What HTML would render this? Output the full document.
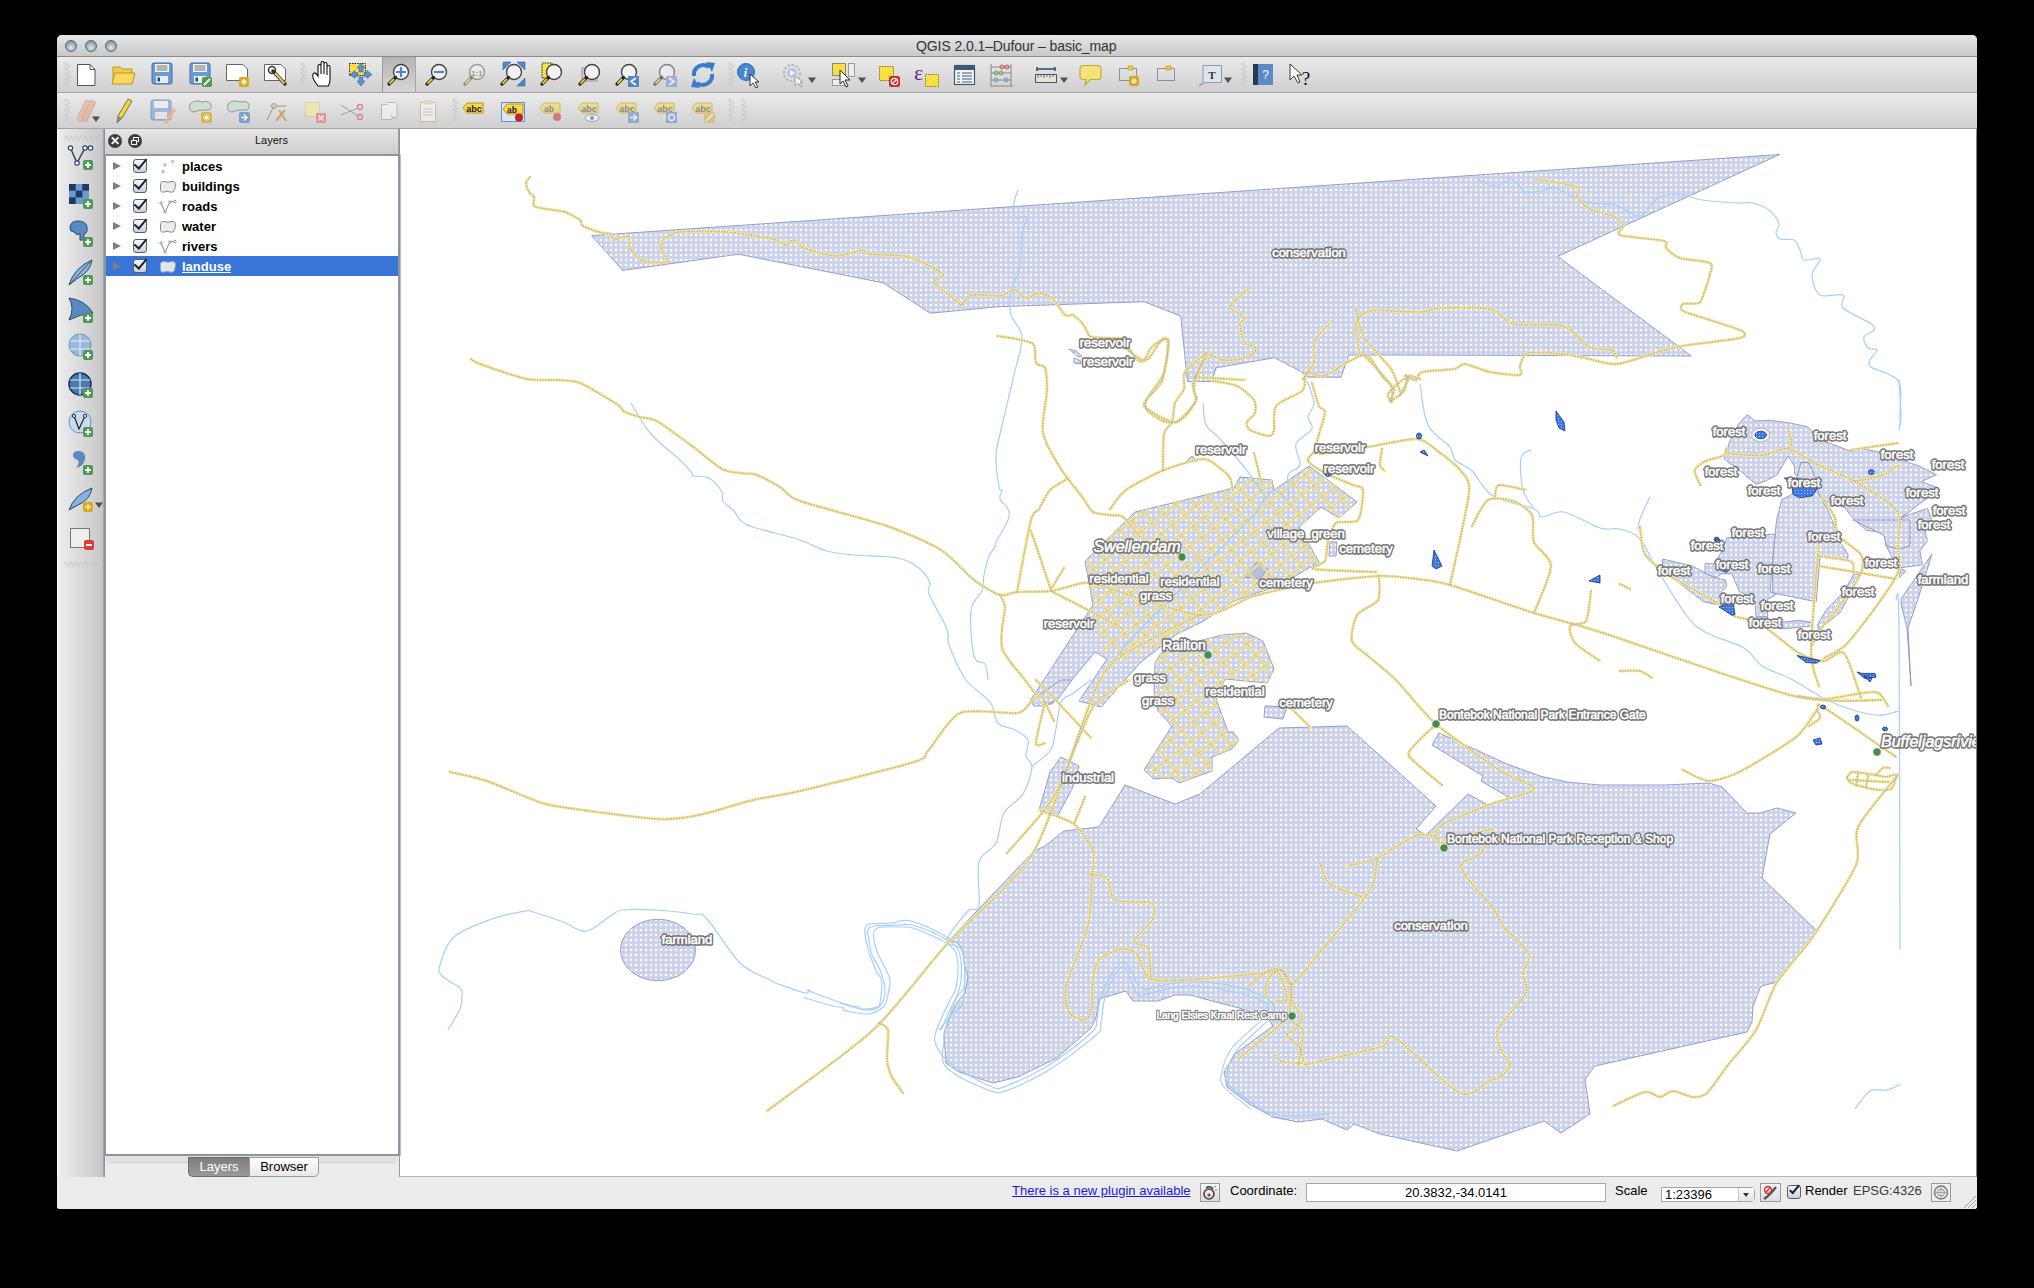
<!DOCTYPE html>
<html><head><meta charset="utf-8">
<style>
*{margin:0;padding:0;box-sizing:border-box}
html,body{width:2034px;height:1288px;background:#000;overflow:hidden;font-family:"Liberation Sans",sans-serif}
.a{position:absolute}
#win{position:absolute;left:57px;top:35px;width:1920px;height:1174px;background:#ececec;border-radius:5px 5px 3px 3px;overflow:hidden}
#title{position:absolute;left:0;top:0;width:1920px;height:22px;background:linear-gradient(#e6e6e6,#c9c9c9);border-bottom:1px solid #8a8a8a}
#title .t{position:absolute;left:859px;top:3px;font-size:14px;color:#333;white-space:nowrap;letter-spacing:-0.09px}
.lights{position:absolute;top:5px;width:12px;height:12px;border-radius:50%;background:radial-gradient(circle at 50% 65%,#e4ecf2 0,#a8b6c2 45%,#6c7a86 100%);border:1px solid #5d6770}
#tb1{position:absolute;left:0;top:22px;width:1920px;height:36px;background:linear-gradient(#ebebeb,#cfcfcf);border-bottom:1px solid #a5a5a5}
#tb2{position:absolute;left:0;top:58px;width:1920px;height:36px;background:linear-gradient(#ebebeb,#cfcfcf);border-bottom:1px solid #a5a5a5}
#ltb{position:absolute;left:0;top:94px;width:48px;height:1048px;background:linear-gradient(90deg,#fafafa 0,#fafafa 1px,#ececec 2px,#c9c9c9 45px,#a3abb2 46.5px,#7f8a94 48px)}
#dock{position:absolute;left:48px;top:94px;width:295px;height:1048px;background:#ececec}
#docktitle{position:absolute;left:0;top:0;width:295px;height:25px;background:linear-gradient(#e6e6e6,#cecece)}
#tree{position:absolute;left:0;top:25px;width:295px;height:1002px;background:#fff;border-left:1px solid #8c959c;border-right:2px solid #8c959c;border-bottom:2px solid #8c959c;border-top:2px solid #8f989f}
#map{position:absolute;left:343px;top:94px;width:1577px;height:1048px;background:#fff;border-bottom:1px solid #b4b4b4;overflow:hidden}
#status{position:absolute;left:0;top:1142px;width:1920px;height:32px;background:#ececec}
.row{position:absolute;left:0px;width:292px;height:20px;font-size:13px;font-weight:bold;color:#000}
.row span{position:absolute;left:76px;top:3px}
.sel{background:#3875d7;color:#fff}
.sel span{text-decoration:underline}
.arrow{position:absolute;left:7px;top:6px;width:0;height:0;border-left:8px solid #808080;border-top:4.5px solid transparent;border-bottom:4.5px solid transparent}
.cb{position:absolute;left:27px;top:3px;width:14px;height:14px;border:1px solid #5a5f66;border-radius:3px;background:linear-gradient(#f6f8fa,#c9d2da)}
.cb:after{content:"";position:absolute;left:3px;top:-4px;width:5px;height:11px;border-right:2.5px solid #1a2430;border-bottom:2.5px solid #1a2430;transform:rotate(40deg)}
.st{position:absolute;font-size:13px;color:#000;white-space:nowrap}
.lbl{font-family:"Liberation Sans",sans-serif;font-size:13px;fill:#fff;stroke:#6e6e6e;stroke-width:3.4px;stroke-linejoin:round}
.lbl2{font-family:"Liberation Sans",sans-serif;font-size:13px;fill:#fafafa;stroke:#fafafa;stroke-width:0.7px;stroke-linejoin:round}
</style></head><body>
<div id="win">
  <div id="title">
    <div class="lights" style="left:8px"></div>
    <div class="lights" style="left:28px"></div>
    <div class="lights" style="left:48px"></div>
    <div class="t">QGIS 2.0.1–Dufour – basic_map</div>
  </div>
  <div id="tb1"></div>
  <div id="tb2"></div>
  <div id="ltb"></div>
  <div id="dock">
    <div id="docktitle">
      <div class="a" style="left:3px;top:5px;width:14px;height:14px;border-radius:50%;background:#3d3d3d;color:#fff;font-size:12px;font-weight:bold;text-align:center;line-height:14px">✕</div>
      <div class="a" style="left:23px;top:5px;width:14px;height:14px;border-radius:50%;background:#3d3d3d"><div class="a" style="left:5px;top:3px;width:6px;height:5px;border:1.3px solid #fff"></div><div class="a" style="left:3px;top:6px;width:6px;height:5px;border:1.3px solid #fff;background:#3d3d3d"></div></div>
      <div class="a" style="left:40px;top:5px;width:253px;text-align:center;font-size:11px;color:#111">Layers</div>
    </div>
    <div id="tree">
      <div class="row" style="top:0"><div class="arrow"></div><div class="cb"></div><svg class="gi" width="18" height="16" style="position:absolute;left:53px;top:2px"><rect x="12.5" y="2.5" width="2" height="2" transform="rotate(45 13.5 3.5)" fill="#fff" stroke="#777" stroke-width="0.7"/><rect x="5" y="6" width="2" height="2" transform="rotate(45 6 7)" fill="#fff" stroke="#777" stroke-width="0.7"/><rect x="3" y="12.5" width="2" height="2" transform="rotate(45 4 13.5)" fill="#fff" stroke="#777" stroke-width="0.7"/></svg><span>places</span></div>
      <div class="row" style="top:20px"><div class="arrow"></div><div class="cb"></div><svg class="gi" width="18" height="14" style="position:absolute;left:53px;top:4px"><path d="M1.5,5 Q1,1.5 5,1.5 Q9,3 13,1.5 Q16.5,1 16.5,5 Q16,8 15.5,10 Q15,13 11,12 Q8,10.5 5,12 Q1.5,13 1.5,9 Z" fill="#ececec" stroke="#8a8a8a" stroke-width="1"/></svg><span>buildings</span></div>
      <div class="row" style="top:40px"><div class="arrow"></div><div class="cb"></div><svg class="gi" width="18" height="16" style="position:absolute;left:53px;top:2px"><path d="M2,5 L6,14 L11,4 L16,3.5" fill="none" stroke="#777" stroke-width="0.9"/><circle cx="2" cy="5" r="1.2" fill="#fff" stroke="#777" stroke-width="0.7"/><circle cx="6" cy="14" r="1.2" fill="#fff" stroke="#777" stroke-width="0.7"/><circle cx="11" cy="4" r="1.2" fill="#fff" stroke="#777" stroke-width="0.7"/><circle cx="16" cy="3.5" r="1.2" fill="#fff" stroke="#777" stroke-width="0.7"/></svg><span>roads</span></div>
      <div class="row" style="top:60px"><div class="arrow"></div><div class="cb"></div><svg class="gi" width="18" height="14" style="position:absolute;left:53px;top:4px"><path d="M1.5,5 Q1,1.5 5,1.5 Q9,3 13,1.5 Q16.5,1 16.5,5 Q16,8 15.5,10 Q15,13 11,12 Q8,10.5 5,12 Q1.5,13 1.5,9 Z" fill="#ececec" stroke="#8a8a8a" stroke-width="1"/></svg><span>water</span></div>
      <div class="row" style="top:80px"><div class="arrow"></div><div class="cb"></div><svg class="gi" width="18" height="16" style="position:absolute;left:53px;top:2px"><path d="M2,5 L6,14 L11,4 L16,3.5" fill="none" stroke="#777" stroke-width="0.9"/><circle cx="2" cy="5" r="1.2" fill="#fff" stroke="#777" stroke-width="0.7"/><circle cx="6" cy="14" r="1.2" fill="#fff" stroke="#777" stroke-width="0.7"/><circle cx="11" cy="4" r="1.2" fill="#fff" stroke="#777" stroke-width="0.7"/><circle cx="16" cy="3.5" r="1.2" fill="#fff" stroke="#777" stroke-width="0.7"/></svg><span>rivers</span></div>
      <div class="row sel" style="top:100px"><div class="arrow"></div><div class="cb"></div><svg class="gi" width="18" height="14" style="position:absolute;left:53px;top:4px"><path d="M1.5,5 Q1,1.5 5,1.5 Q9,3 13,1.5 Q16.5,1 16.5,5 Q16,8 15.5,10 Q15,13 11,12 Q8,10.5 5,12 Q1.5,13 1.5,9 Z" fill="#dfe6ee" stroke="#a0a8b0" stroke-width="1"/></svg><span>landuse</span></div>
    </div>
    <div class="a" style="left:1px;top:1027px;width:292px;height:7px;border-radius:0 0 5px 5px;background:#e2e2e2;border-bottom:1px solid #d0d0d0"></div>
    <div class="a" style="left:83px;top:1028px;width:61px;height:20px;border:1px solid #6e6e6e;border-right:none;border-radius:0 0 0 5px;background:linear-gradient(#7d7d7d,#9a9a9a);color:#fff;font-size:13px;text-align:center;line-height:18px">Layers</div>
    <div class="a" style="left:144px;top:1028px;width:70px;height:20px;border:1px solid #9a9a9a;border-radius:0 0 5px 0;background:linear-gradient(#fdfdfd,#e8e8e8);color:#000;font-size:13px;text-align:center;line-height:18px">Browser</div>
  </div>
  <div id="map">
    <svg width="1577" height="1048" viewBox="400 129 1577 1048" style="position:absolute;left:0;top:0">
<defs>
<pattern id="dots" width="5" height="5" patternUnits="userSpaceOnUse" x="0" y="4">
<rect width="5" height="5" fill="#cdd4eb"/><rect x="0" y="0" width="2" height="2" fill="#ffffff"/><rect x="3" y="3" width="1" height="1" fill="#c3cae3"/>
</pattern>
<pattern id="wdots" width="3" height="3" patternUnits="userSpaceOnUse">
<rect width="3" height="3" fill="#3b78e8"/><rect x="1" y="1" width="1" height="1" fill="#a9c6f7"/>
</pattern>
<pattern id="streets" width="15" height="14" patternUnits="userSpaceOnUse" patternTransform="rotate(-38)">
<path d="M0,1.5 H15 M1.5,0 V14" stroke="#f8e68c" stroke-width="3" fill="none"/><path d="M0,1.5 H15 M1.5,0 V14" stroke="#bdbaa8" stroke-width="1.2" stroke-dasharray="1.4 1.4" fill="none"/>
</pattern>
<clipPath id="townclip">
<polygon points="1161,653 1202,640 1223,635 1246,633 1263,641 1274,669 1267,683 1225,679 1216,698 1228,732 1233,732 1239,740 1232,749 1212,757 1212,771 1179,783 1172,778 1154,779 1144,770 1172,726 1158,711 1154,693 1155,663"/>
<polygon points="1085,561 1135,512 1234,488 1240,477 1272,480 1274,490 1309,466 1357,502 1339,518 1321,507 1299,527 1319,562 1280,585 1234,601 1202,622 1150,650 1115,668 1098,645 1093,605"/>
</clipPath>
</defs>
<g fill="url(#dots)" stroke="#8b95c6" stroke-width="0.9">
<polygon points="591.6,235.6 1000,207.5 1400,180.3 1779.6,154.5 1557.6,256.4 1691.3,356 1400,355 1349,355 1341,377.3 1307,377 1301.6,371.8 1274.5,357.7 1216,367.8 1212,381.4 1187.5,381.4 1180.7,316 1144,301.7 1000,306.6 930.4,313.2 883,282.8 738.5,254.2 622.7,270.4"/>
<polygon points="1125,785 1175,804 1200,794 1279,728 1347,726 1436,806 1416,829 1426,835 1468,794 1488,805 1510,798 1481,781 1483,776 1432,745 1439,733 1472,748 1507,764 1540,776 1567,782 1600,785 1665,785 1709,783 1722,787 1747,813 1760,813 1777,808 1796,813 1770,834 1762,878 1817,931 1778,982 1761,986 1753,1006 1752,1022 1747,1032 1595,1066 1585,1079 1590,1114 1561,1133 1544,1121 1457,1151 1380,1134 1354,1124 1347,1130 1322,1119 1298,1122 1273,1117 1249,1104 1227,1087 1224,1072 1236,1053 1273,1026 1268,1018 1239,1008 1212,1001 1190,995 1175,995 1158,1001 1133,1001 1126,991 1099,999 1096,1018 1091,1028 1057,1058 1018,1077 993,1083 959,1072 946,1063 944,1036 945.2,1030 949.6,1017 956,1004 964.8,993 968,977 964.8,966 962.6,951 960.4,945.4 956,942 947.4,942 1034,851 1045,846 1064,831 1099,827"/>
<polygon points="1061,757 1079,766 1072,789 1057,817 1039,810 1050,772"/>
<polygon points="1030,701 1093,605 1085,561 1135,512 1234,488 1240,477 1272,480 1274,490 1309,466 1357,502 1339,518 1321,507 1299,527 1319,562 1280,585 1234,601 1202,622 1177,634 1141,662 1101,707 1079,701 1107,659 1095,652 1052,704 1034,705"/>
<polygon points="1161,653 1202,640 1223,635 1246,633 1263,641 1274,669 1267,683 1225,679 1216,698 1228,732 1233,732 1239,740 1232,749 1212,757 1212,771 1179,783 1172,778 1154,779 1144,770 1172,726 1158,711 1154,693 1155,663"/>
<polygon points="1265,706 1287,707 1283,719 1264,717"/>
<polygon points="1330,542 1337,542 1336,556 1329,556"/>
<polygon points="1069,349 1076,351 1082,356 1078,357"/>
<polygon points="1074,358 1081,361 1081,364 1074,363"/>
<polygon points="1186,462 1192,456 1197,461"/>
<polygon points="1724.3,458.7 1729.4,442.1 1738.3,424.2 1747.3,414.6 1755,421 1769.7,420.3 1789.5,422.9 1807.4,426.7 1821.4,440.2 1852.1,451.7 1859.8,448.5 1891.7,454.2 1902,460 1919.9,466.4 1936.5,474.7 1921.1,481.7 1935.2,486.8 1937.8,494.5 1927.5,498.3 1919.9,503.4 1907.1,513.7 1902,516.2 1899.4,532.8 1885.4,532.8 1866.2,530.3 1853.4,518.8 1844.4,507.3 1827.8,502.2 1818.9,494.5 1815,481.7 1808.7,462.5 1801,462.5 1798.4,476.6 1794.6,474 1794.6,466.4 1788.2,456.1 1776.7,475.3 1763.9,481.7 1756.2,484.3 1740.9,471.5 1726.8,461.2"/>
<polygon points="1902,517 1927.5,508.5 1931.4,518.8 1925,532.8 1927.5,540.5 1919.9,550.7 1922.4,565 1898,568 1886,546 1884,533 1899.4,532.8"/>
<polygon points="1781.8,499.6 1792,494.5 1801,462.5 1808.7,462.5 1815,476.6 1818.9,494.5 1827.8,509.8 1834.2,525.2 1840.6,543 1848.1,554.5 1847.5,560.9 1820,557 1816.2,601.8 1772.7,592.9 1772.7,558.3 1776.6,520"/>
<polygon points="1662.8,559 1692.2,566 1713.9,577.5 1725.4,580.1 1726.7,586.5 1721.6,591.6 1721.6,603.1 1716.5,604.4 1703.7,601.8 1675.6,580.1 1669.2,573.7 1662.1,566"/>
<polygon points="1705,563.5 1713.9,564.1 1721.6,552 1726.7,537.9 1775.3,534.1 1772.7,558.3 1770.2,591.6 1776.6,594.1 1767.6,599.3 1767.6,617.2 1756.1,617.2 1754.8,599.3 1739.5,591.6 1731.8,573.7 1721.6,573.7 1716.5,577.5 1705,573.7"/>
<polygon points="1783,622.3 1798.3,620.3 1812.3,622.3 1811,626.1 1785.5,628.7 1777.8,628.7"/>
<polygon points="1756,617 1767.6,617 1767.6,628.7 1756,627.4"/>
<polygon points="1817.5,624.8 1826.4,609.5 1844.3,591.6 1853.2,575 1859.6,573.7 1850.7,592.9 1840.5,612 1825.1,624.8 1818.7,629.9"/>
<polygon points="1853.2,520 1883.9,535.3 1886.5,545.6 1899.3,549.4 1910,545.6 1910,520"/>
<polygon points="1900.5,568.6 1905.7,571.1 1899.3,577.5"/>
<polygon points="1901,599 1932,554 1918,599 1908,628 1911,686 1907,628 1901,604"/>
<polygon points="1031,702 1045,691 1061,680 1072,680 1058,699 1045,706 1034,706"/>
<ellipse cx="658" cy="950" rx="37.5" ry="30.7"/>
</g>
<g fill="#b3bee3" stroke="#8b95c6" stroke-width="0.9">
<polygon points="1243,577 1257,562 1268,569 1260,579"/>
</g>
<rect x="1000" y="440" width="900" height="360" fill="url(#streets)" clip-path="url(#townclip)" opacity="0.9"/>
<g fill="none" stroke="#a6cefc" stroke-width="1.2" stroke-linejoin="round">
<path d="M1477,179 C1480.0,180.2 1489.3,186.0 1495,186 C1500.7,186.0 1507.2,179.3 1511,179 C1514.8,178.7 1515.7,181.8 1518,184 C1520.3,186.2 1521.2,190.8 1525,192 C1528.8,193.2 1536.0,191.7 1541,191 C1546.0,190.3 1549.5,187.0 1555,188 C1560.5,189.0 1568.2,194.5 1574,197 C1579.8,199.5 1583.2,201.7 1590,203 C1596.8,204.3 1606.8,202.8 1615,205 C1623.2,207.2 1632.7,216.3 1639,216 C1645.3,215.7 1649.3,206.3 1653,203 C1656.7,199.7 1656.0,197.3 1661,196 C1666.0,194.7 1676.2,194.3 1683,195 C1689.8,195.7 1693.0,198.7 1702,200 C1711.0,201.3 1728.5,202.5 1737,203 C1745.5,203.5 1747.5,201.7 1753,203 C1758.5,204.3 1765.7,207.5 1770,211 C1774.3,214.5 1778.0,220.5 1779,224 C1780.0,227.5 1775.8,229.5 1776,232 C1776.2,234.5 1777.0,237.7 1780,239 C1783.0,240.3 1790.7,238.2 1794,240 C1797.3,241.8 1798.3,246.7 1800,250 C1801.7,253.3 1800.7,258.5 1804,260 C1807.3,261.5 1818.7,256.5 1820,259 C1821.3,261.5 1812.0,269.0 1812,275 C1812.0,281.0 1814.8,291.7 1820,295 C1825.2,298.3 1839.2,292.8 1843,295 C1846.8,297.2 1838.5,303.3 1843,308 C1847.5,312.7 1864.8,319.3 1870,323 C1875.2,326.7 1875.0,327.7 1874,330 C1873.0,332.3 1865.0,334.0 1864,337 C1863.0,340.0 1865.8,345.8 1868,348 C1870.2,350.2 1876.7,348.0 1877,350 C1877.3,352.0 1871.0,357.2 1870,360 C1869.0,362.8 1867.7,364.5 1871,367 C1874.3,369.5 1885.2,372.0 1890,375 C1894.8,378.0 1898.3,378.3 1900,385 C1901.7,391.7 1900.0,408.3 1900,415 C1900.0,421.7 1900.0,423.3 1900,425"/>
<path d="M631,403 C634.3,408.2 642.8,424.5 651,434 C659.2,443.5 673.2,453.5 680,460 C686.8,466.5 689.8,470.3 692,473 C694.2,475.7 690.2,475.2 693,476 C695.8,476.8 704.2,475.3 709,478 C713.8,480.7 719.7,488.2 722,492 C724.3,495.8 721.0,497.8 723,501 C725.0,504.2 730.8,507.5 734,511 C737.2,514.5 738.3,519.2 742,522 C745.7,524.8 750.5,526.2 756,528 C761.5,529.8 767.7,531.0 775,533 C782.3,535.0 791.3,537.0 800,540 C808.7,543.0 818.0,548.5 827,551 C836.0,553.5 842.2,553.8 854,555 C865.8,556.2 887.0,555.7 898,558 C909.0,560.3 914.7,564.8 920,569 C925.3,573.2 928.5,578.8 930,583 C931.5,587.2 926.2,586.3 929,594 C931.8,601.7 943.7,620.5 947,629 C950.3,637.5 945.8,636.5 949,645 C952.2,653.5 959.2,670.5 966,680 C972.8,689.5 984.7,694.8 990,702 C995.3,709.2 993.8,718.3 998,723 C1002.2,727.7 1010.0,727.2 1015,730 C1020.0,732.8 1026.2,735.7 1028,740 C1029.8,744.3 1025.3,751.5 1026,756 C1026.7,760.5 1032.5,760.7 1032,767 C1031.5,773.3 1027.7,786.3 1023,794 C1018.3,801.7 1008.5,804.8 1004,813 C999.5,821.2 1000.2,834.8 996,843 C991.8,851.2 981.8,851.5 979,862 C976.2,872.5 980.8,897.8 979,906 C977.2,914.2 973.3,905.2 968,911 C962.7,916.8 947.8,934.2 947,941 C946.2,947.8 960.3,942.2 963,952 C965.7,961.8 964.8,989.7 963,1000 C961.2,1010.3 956.0,1009.0 952,1014 C948.0,1019.0 941.2,1027.3 939,1030"/>
<path d="M1018,190 C1017.3,192.2 1014.5,198.5 1014,203 C1013.5,207.5 1012.8,214.7 1015,217 C1017.2,219.3 1025.8,214.3 1027,217 C1028.2,219.7 1023.2,224.8 1022,233 C1020.8,241.2 1021.8,256.0 1020,266 C1018.2,276.0 1012.5,284.8 1011,293 C1009.5,301.2 1009.2,307.7 1011,315 C1012.8,322.3 1021.5,327.0 1022,337 C1022.5,347.0 1017.7,358.8 1014,375 C1010.3,391.2 1003.0,420.5 1000,434 C997.0,447.5 996.2,447.2 996,456 C995.8,464.8 998.0,481.3 999,487 C1000.0,492.7 1001.8,488.0 1002,490 C1002.2,492.0 999.0,495.8 1000,499 C1001.0,502.2 1006.7,505.5 1008,509 C1009.3,512.5 1010.0,514.5 1008,520 C1006.0,525.5 998.2,537.5 996,542 C993.8,546.5 996.2,544.7 995,547 C993.8,549.3 990.8,551.3 989,556 C987.2,560.7 985.2,569.2 984,575 C982.8,580.8 984.2,585.2 982,591 C979.8,596.8 972.3,599.2 971,610 C969.7,620.8 971.7,647.0 974,656 C976.3,665.0 982.7,660.0 985,664 C987.3,668.0 987.5,677.3 988,680"/>
<path d="M1091,680 C1087.8,682.3 1077.0,690.3 1072,694 C1067.0,697.7 1063.8,695.3 1061,702 C1058.2,708.7 1056.8,725.8 1055,734 C1053.2,742.2 1054.0,745.5 1050,751 C1046.0,756.5 1034.2,764.3 1031,767"/>
<path d="M448,1030 C450.0,1026.5 457.7,1014.8 460,1009 C462.3,1003.2 462.0,998.5 462,995 C462.0,991.5 463.3,991.2 460,988 C456.7,984.8 445.3,979.8 442,976 C438.7,972.2 438.0,971.5 440,965 C442.0,958.5 445.3,944.7 454,937 C462.7,929.3 480.2,923.3 492,919 C503.8,914.7 518.2,912.2 525,911 C531.8,909.8 526.7,910.2 533,912 C539.3,913.8 555.3,919.0 563,922 C570.7,925.0 574.5,928.7 579,930 C583.5,931.3 584.5,932.5 590,930 C595.5,927.5 606.5,918.3 612,915 C617.5,911.7 615.8,910.8 623,910 C630.2,909.2 643.3,909.3 655,910 C666.7,910.7 684.3,912.5 693,914 C701.7,915.5 699.2,910.8 707,919 C714.8,927.2 729.5,952.8 740,963 C750.5,973.2 763.3,976.4 770,980 C776.7,983.6 774.0,982.4 780,984.6 C786.0,986.8 801.3,992.2 806,993 C810.7,993.8 806.7,989.5 808,989.5 C809.3,989.5 807.2,990.4 814,993 C820.8,995.6 841.2,1002.7 848.5,1005 C855.8,1007.3 855.6,1006.3 858,1007 C860.4,1007.7 859.6,1008.9 862.6,1009 C865.6,1009.1 872.8,1008.4 875.7,1007.4 C878.6,1006.4 879.0,1007.4 880,1003 C881.0,998.6 882.3,986.5 881.6,981 C880.9,975.5 877.6,974.3 875.7,970 C873.8,965.7 871.6,960.0 870,955 C868.4,950.0 866.8,944.3 866,940 C865.2,935.7 864.3,931.7 865,929 C865.7,926.3 865.7,925.0 870,924 C874.3,923.0 885.3,923.6 891,923 C896.7,922.4 900.4,920.6 904,920.4 C907.6,920.1 907.9,920.1 912.6,921.5 C917.3,922.9 926.3,926.4 932,929 C937.7,931.6 943.3,935.0 947,937 C950.7,939.0 951.8,939.4 954,941 C956.2,942.6 958.4,943.8 960,946.5 C961.6,949.2 962.9,952.8 963.7,957 C964.5,961.2 964.8,966.3 964.8,971.5 C964.8,976.7 965.2,983.4 963.7,988 C962.2,992.6 959.1,992.0 956,999 C952.9,1006.0 947.0,1023.2 945,1030 C943.0,1036.8 943.8,1033.8 944,1040 C944.2,1046.2 938.7,1058.7 946,1067 C953.3,1075.3 977.7,1086.2 988,1090 C998.3,1093.8 997.3,1093.7 1008,1090 C1018.7,1086.3 1037.3,1077.2 1052,1068 C1066.7,1058.8 1087.8,1042.5 1096,1035 C1104.2,1027.5 1099.3,1029.8 1101,1023 C1102.7,1016.2 1102.3,1003.3 1106,994 C1109.7,984.7 1117.7,967.0 1123,967 C1128.3,967.0 1132.2,990.0 1138,994 C1143.8,998.0 1148.5,992.3 1158,991 C1167.5,989.7 1179.8,985.2 1195,986 C1210.2,986.8 1236.8,991.8 1249,996 C1261.2,1000.2 1270.8,1002.3 1268,1011 C1265.2,1019.7 1239.7,1037.8 1232,1048 C1224.3,1058.2 1223.3,1065.5 1222,1072 C1220.7,1078.5 1219.2,1080.8 1224,1087 C1228.8,1093.2 1246.5,1105.3 1251,1109"/>
<path d="M804,997.6 C808.8,999.0 826.5,1004.4 833,1006 C839.5,1007.6 841.0,1006.6 843,1007.4 C845.0,1008.2 841.0,1009.6 845,1010.7 C849.0,1011.8 861.5,1014.0 867,1014 C872.5,1014.0 875.0,1012.2 878,1010.7 C881.0,1009.2 883.2,1008.3 885,1005 C886.8,1001.7 887.9,995.3 888.7,991 C889.5,986.7 890.8,983.5 889.8,979 C888.8,974.5 885.2,968.7 883,964 C880.8,959.3 878.3,955.7 876.7,951 C875.1,946.3 873.7,939.4 873.5,935.7 C873.3,932.0 874.0,930.5 875.7,929 C877.5,927.5 879.5,927.3 884,927 C888.5,926.7 898.2,926.8 903,927 C907.8,927.2 907.8,926.5 912.6,928 C917.4,929.5 926.4,933.2 932,935.7 C937.6,938.2 942.2,940.5 946,943 C949.8,945.5 953.0,947.2 955,951 C957.0,954.8 957.8,959.8 958,966 C958.2,972.2 957.4,982.2 956,988 C954.6,993.8 952.9,994.0 949.6,1001 C946.4,1008.0 938.8,1022.7 936.5,1030 C934.2,1037.3 933.6,1039.3 936,1045 C938.4,1050.7 942.0,1057.2 951,1064 C960.0,1070.8 980.8,1082.3 990,1086 C999.2,1089.7 996.2,1089.5 1006,1086 C1015.8,1082.5 1034.8,1073.8 1049,1065 C1063.2,1056.2 1083.0,1040.5 1091,1033 C1099.0,1025.5 1095.2,1026.7 1097,1020 C1098.8,1013.3 1097.7,1002.7 1102,993 C1106.3,983.3 1116.5,962.8 1123,962 C1129.5,961.2 1134.8,984.0 1141,988 C1147.2,992.0 1150.8,987.2 1160,986 C1169.2,984.8 1180.8,980.2 1196,981 C1211.2,981.8 1238.0,986.0 1251,991 C1264.0,996.0 1276.3,1001.2 1274,1011 C1271.7,1020.8 1244.8,1039.8 1237,1050 C1229.2,1060.2 1228.3,1066.2 1227,1072 C1225.7,1077.8 1224.5,1079.7 1229,1085 C1233.5,1090.3 1249.8,1100.8 1254,1104"/>
<path d="M839,1003 C843.5,1004.2 859.2,1009.5 866,1010 C872.8,1010.5 876.8,1009.3 880,1006 C883.2,1002.7 885.0,996.0 885,990 C885.0,984.0 882.2,975.8 880,970 C877.8,964.2 873.8,960.0 872,955 C870.2,950.0 869.7,944.2 869,940 C868.3,935.8 867.0,932.3 868,930 C869.0,927.7 869.7,926.8 875,926 C880.3,925.2 893.8,925.2 900,925 C906.2,924.8 906.7,923.8 912,925 C917.3,926.2 926.2,929.5 932,932 C937.8,934.5 942.8,937.3 947,940 C951.2,942.7 954.7,944.5 957,948 C959.3,951.5 960.3,955.7 961,961 C961.7,966.3 961.5,974.7 961,980 C960.5,985.3 959.8,988.0 958,993 C956.2,998.0 952.8,1003.8 950,1010 C947.2,1016.2 942.5,1026.7 941,1030"/>
<path d="M1236,1092 C1242.2,1095.7 1257.0,1110.3 1273,1114 C1289.0,1117.7 1322.2,1114.0 1332,1114"/>
<path d="M1203,403 C1203.5,406.7 1203.2,419.0 1206,425 C1208.8,431.0 1212.8,431.0 1220,439 C1227.2,447.0 1241.2,462.8 1249,473 C1256.8,483.2 1264.0,495.5 1267,500"/>
<path d="M1307,381 C1308.2,384.7 1313.8,397.0 1314,403 C1314.2,409.0 1308.3,412.7 1308,417 C1307.7,421.3 1314.0,424.5 1312,429 C1310.0,433.5 1298.0,438.0 1296,444 C1294.0,450.0 1301.3,459.8 1300,465 C1298.7,470.2 1290.0,469.2 1288,475 C1286.0,480.8 1290.5,497.5 1288,500 C1285.5,502.5 1278.7,487.5 1273,490 C1267.3,492.5 1260.3,507.7 1254,515 C1247.7,522.3 1244.0,525.0 1235,534 C1226.0,543.0 1210.8,558.0 1200,569 C1189.2,580.0 1181.7,588.2 1170,600 C1158.3,611.8 1141.7,626.7 1130,640 C1118.3,653.3 1105.0,673.3 1100,680"/>
<path d="M1420,384 C1421.3,390.8 1423.0,414.5 1428,425 C1433.0,435.5 1445.5,441.2 1450,447 C1454.5,452.8 1451.3,456.0 1455,460 C1458.7,464.0 1465.7,465.0 1472,471 C1478.3,477.0 1482.7,489.7 1493,496 C1503.3,502.3 1525.8,505.5 1534,509 C1542.2,512.5 1537.0,516.5 1542,517 C1547.0,517.5 1554.3,510.2 1564,512 C1573.7,513.8 1590.7,525.2 1600,528 C1609.3,530.8 1613.3,527.2 1620,529 C1626.7,530.8 1633.8,532.3 1640,539 C1646.2,545.7 1649.2,556.2 1657,569 C1664.8,581.8 1678.7,605.3 1687,616 C1695.3,626.7 1697.5,627.7 1707,633 C1716.5,638.3 1734.8,642.5 1744,648 C1753.2,653.5 1753.8,660.7 1762,666 C1770.2,671.3 1781.5,674.0 1793,680 C1804.5,686.0 1817.3,696.2 1831,702 C1844.7,707.8 1863.7,713.5 1875,715 C1886.3,716.5 1895.0,711.7 1899,711"/>
<path d="M1531,450 C1529.3,451.3 1522.3,451.3 1521,458 C1519.7,464.7 1520.8,481.5 1523,490 C1525.2,498.5 1532.2,505.8 1534,509"/>
<path d="M1650,497 C1648.3,500.7 1642.0,513.5 1640,519 C1638.0,524.5 1638.3,528.2 1638,530"/>
<path d="M1899,380 C1899.3,386.2 1901.0,408.7 1901,417 C1901.0,425.3 1899.3,427.8 1899,430"/>
<path d="M1896,599 C1896.5,603.8 1898.3,569.7 1899,628 C1899.7,686.3 1899.8,895.5 1900,949"/>
<path d="M1855,1109 C1857.5,1106.0 1864.7,1094.2 1870,1091 C1875.3,1087.8 1881.8,1091.2 1887,1090 C1892.2,1088.8 1898.7,1085.0 1901,1084"/>
</g>
<g fill="none" stroke="#fde98a" stroke-width="3" stroke-linejoin="round" stroke-linecap="round">
<path d="M530,177 C529.5,177.8 526.1,181.1 526,183 C525.9,184.9 528.0,190.2 529,192 C530.0,193.8 533.4,195.2 534,197 C534.6,198.8 532.5,204.5 534,206 C535.5,207.5 542.1,208.2 546,209 C549.9,209.8 560.8,210.6 565,212 C569.2,213.4 577.8,218.2 580,220 C582.2,221.8 580.6,224.5 583,226 C585.4,227.5 595.5,231.0 599,232 C602.5,233.0 609.1,233.0 611,234 C612.9,235.0 611.9,239.8 614,240 C616.1,240.2 626.0,235.0 628,236 C630.0,237.0 628.2,245.0 630,248 C631.8,251.0 637.4,258.2 642,260 C646.6,261.8 664.6,263.5 667,262 C669.4,260.5 661.4,250.9 661,248 C660.6,245.1 661.6,241.0 664,239 C666.4,237.0 672.2,232.9 680,232 C687.8,231.1 714.4,231.1 726,232 C737.6,232.9 765.6,237.4 773,239 C780.4,240.6 782.4,244.9 785,245 C787.6,245.1 791.6,239.6 794,240 C796.4,240.4 798.9,246.0 804,248 C809.1,250.0 827.6,255.8 835,256 C842.4,256.2 858.8,250.2 863,250 C867.2,249.8 863.2,253.1 869,254 C874.8,254.9 899.8,254.5 909,257 C918.2,259.5 939.9,270.9 943,274 C946.1,277.1 932.8,279.0 934,282 C935.2,285.0 949.5,295.1 953,298 C956.5,300.9 959.8,305.4 962,305 C964.2,304.6 966.2,296.1 971,295 C975.8,293.9 994.6,296.6 1000,296 C1005.4,295.4 1010.6,289.8 1014,290 C1017.4,290.2 1024.0,297.6 1027,298 C1030.0,298.4 1034.9,293.0 1038,293 C1041.1,293.0 1048.6,295.2 1052,298 C1055.4,300.8 1062.4,312.9 1065,315 C1067.6,317.1 1070.9,314.0 1073,315 C1075.1,316.0 1080.2,321.0 1082,323 C1083.8,325.0 1085.8,329.2 1087,331 C1088.2,332.8 1087.2,336.0 1092,337 C1096.8,338.0 1120.5,337.8 1125,339 C1129.5,340.2 1126.2,344.2 1128,347 C1129.8,349.8 1136.4,359.6 1139,361 C1141.6,362.4 1146.4,360.4 1149,358 C1151.6,355.6 1157.6,344.4 1160,342 C1162.4,339.6 1167.0,338.0 1168,339 C1169.0,340.0 1168.6,345.5 1168,350 C1167.4,354.5 1165.6,368.9 1163,375 C1160.4,381.1 1149.0,394.6 1147,399 C1145.0,403.4 1145.0,407.2 1147,410 C1149.0,412.8 1159.2,419.5 1163,421 C1166.8,422.5 1173.9,423.0 1177,422 C1180.1,421.0 1185.6,415.9 1188,413 C1190.4,410.1 1195.4,402.8 1196,399 C1196.6,395.2 1191.6,388.4 1193,383 C1194.4,377.6 1205.2,359.4 1207,356"/>
<path d="M471,359 C472.1,359.6 473.0,361.5 480,364 C487.0,366.5 517.0,377.0 527,379 C537.0,381.0 553.8,379.6 560,380 C566.2,380.4 573.2,381.0 577,382 C580.8,383.0 584.9,385.1 590,388 C595.1,390.9 613.6,402.0 618,405 C622.4,408.0 622.2,410.5 625,412 C627.8,413.5 636.8,416.1 640,417 C643.2,417.9 648.5,418.2 651,419 C653.5,419.8 654.9,419.6 660,423 C665.1,426.4 684.2,440.2 692,446 C699.8,451.8 716.0,465.6 722,469 C728.0,472.4 735.6,472.2 740,473 C744.4,473.8 752.0,473.2 757,475 C762.0,476.8 774.6,483.8 780,487 C785.4,490.2 786.6,496.1 800,501 C813.4,505.9 869.4,519.9 887,526 C904.6,532.1 930.1,543.2 941,550 C951.9,556.8 966.6,574.4 974,580 C981.4,585.6 994.6,593.5 1000,595 C1005.4,596.5 1010.6,592.5 1017,592 C1023.4,591.5 1042.8,592.1 1051,591 C1059.2,589.9 1077.0,583.8 1083,583 C1089.0,582.2 1097.0,584.8 1099,585"/>
<path d="M1000,595 C1000.6,596.5 1004.8,602.8 1005,607 C1005.2,611.2 1002.4,623.9 1002,629 C1001.6,634.1 1000.8,643.6 1002,648 C1003.2,652.4 1009.1,660.0 1012,664 C1014.9,668.0 1022.0,676.1 1025,680 C1028.0,683.9 1034.6,693.1 1036,695"/>
<path d="M1051,591 C1055.6,593.4 1079.0,605.2 1088,610 C1097.0,614.8 1118.6,626.6 1123,629"/>
<path d="M1017,592 C1018.8,583.0 1028.2,530.4 1031,520 C1033.8,509.6 1036.6,512.8 1039,509 C1041.4,505.2 1046.2,493.9 1050,490 C1053.8,486.1 1066.6,479.5 1069,478"/>
<path d="M1031,531 L1051,590"/>
<path d="M1051,589 L1064,568"/>
<path d="M998,336 C1000.9,336.5 1016.5,338.9 1021,340 C1025.5,341.1 1032.1,342.1 1034,345 C1035.9,347.9 1034.6,360.1 1036,363 C1037.4,365.9 1043.6,364.6 1045,368 C1046.4,371.4 1047.2,381.9 1047,390 C1046.8,398.1 1041.2,423.1 1043,433 C1044.8,442.9 1056.0,460.9 1061,469 C1066.0,477.1 1079.0,492.6 1083,498 C1087.0,503.4 1089.6,509.9 1093,512 C1096.4,514.1 1106.2,514.4 1110,515 C1113.8,515.6 1119.2,514.2 1123,517 C1126.8,519.8 1137.9,534.5 1140,537"/>
<path d="M1110,509 C1112.0,506.6 1119.2,494.9 1126,490 C1132.8,485.1 1154.4,473.9 1164,470 C1173.6,466.1 1196.0,459.2 1203,459 C1210.0,458.8 1216.6,465.6 1220,468 C1223.4,470.4 1228.4,475.0 1230,478 C1231.6,481.0 1232.6,490.2 1233,492"/>
<path d="M1163,470 C1163.1,465.5 1162.9,440.0 1164,434 C1165.1,428.0 1170.6,425.9 1172,422 C1173.4,418.1 1173.5,407.1 1175,403 C1176.5,398.9 1182.8,392.9 1184,389 C1185.2,385.1 1182.2,376.5 1185,372 C1187.8,367.5 1203.4,355.4 1206,353"/>
<path d="M1250,288 C1247.5,290.2 1231.2,302.8 1230,306 C1228.8,309.2 1238.1,312.4 1240,314 C1241.9,315.6 1245.0,317.8 1245,319 C1245.0,320.2 1240.1,321.1 1240,324 C1239.9,326.9 1242.1,339.1 1244,342 C1245.9,344.9 1253.8,345.6 1255,347 C1256.2,348.4 1255.9,351.5 1254,353 C1252.1,354.5 1243.9,358.1 1240,359 C1236.1,359.9 1227.2,360.8 1223,360 C1218.8,359.2 1208.1,353.9 1206,353"/>
<path d="M1206,353 C1204.8,355.9 1197.5,371.2 1196,376 C1194.5,380.8 1194.0,387.9 1194,391 C1194.0,394.1 1198.4,397.1 1196,401 C1193.6,404.9 1181.2,421.1 1175,422 C1168.8,422.9 1149.6,410.8 1146,408 C1142.4,405.2 1144.0,403.4 1146,400 C1148.0,396.6 1159.2,387.6 1162,381 C1164.8,374.4 1167.6,352.4 1168,347 C1168.4,341.6 1167.1,337.9 1165,338 C1162.9,338.1 1153.8,345.2 1151,348 C1148.2,350.8 1146.1,360.0 1143,360 C1139.9,360.0 1128.4,350.5 1126,348 C1123.6,345.5 1124.2,341.0 1124,340"/>
<path d="M1194,377 L1245,380"/>
<path d="M1213,381 C1216.0,381.6 1231.9,383.6 1237,386 C1242.1,388.4 1251.8,396.6 1254,400 C1256.2,403.4 1255.9,410.2 1255,413 C1254.1,415.8 1247.6,419.9 1247,422 C1246.4,424.1 1247.2,428.2 1250,430 C1252.8,431.8 1266.0,436.0 1269,436 C1272.0,436.0 1273.1,433.8 1274,430 C1274.9,426.2 1272.5,410.9 1276,406 C1279.5,401.1 1298.4,394.4 1302,391 C1305.6,387.6 1304.4,381.4 1305,379 C1305.6,376.6 1304.6,372.4 1307,372 C1309.4,371.6 1318.9,377.2 1324,376 C1329.1,374.8 1342.6,364.6 1348,362 C1353.4,359.4 1362.8,353.2 1367,355 C1371.2,356.8 1378.6,371.8 1382,376 C1385.4,380.2 1393.0,385.9 1394,389 C1395.0,392.1 1388.8,400.8 1390,401 C1391.2,401.2 1401.8,394.1 1404,391 C1406.2,387.9 1406.0,377.5 1408,376 C1410.0,374.5 1418.5,378.6 1420,379"/>
<path d="M1332,321 C1329.9,323.4 1317.2,334.9 1315,340 C1312.8,345.1 1315.5,357.1 1314,362 C1312.5,366.9 1304.4,376.9 1303,379"/>
<path d="M1360,355 C1359.5,351.1 1354.8,329.5 1356,324 C1357.2,318.5 1362.0,312.5 1370,311 C1378.0,309.5 1411.1,312.4 1420,312 C1428.9,311.6 1432.2,308.4 1441,308 C1449.8,307.6 1480.9,307.0 1490,309 C1499.1,311.0 1504.9,321.9 1514,324 C1523.1,326.1 1553.5,323.1 1563,326 C1572.5,328.9 1583.9,344.0 1590,347 C1596.1,350.0 1608.6,348.6 1612,350 C1615.4,351.4 1616.4,357.0 1617,358"/>
<path d="M1312,383 C1312.9,385.9 1317.4,402.4 1319,406 C1320.6,409.6 1325.0,408.5 1325,412 C1325.0,415.5 1320.4,429.1 1319,434 C1317.6,438.9 1315.4,447.6 1314,451 C1312.6,454.4 1306.6,458.2 1308,461 C1309.4,463.8 1319.4,470.0 1325,473 C1330.6,476.0 1348.2,482.9 1353,485 C1357.8,487.1 1362.4,485.6 1363,490 C1363.6,494.4 1361.4,515.9 1358,520 C1354.6,524.1 1339.8,520.2 1336,523 C1332.2,525.8 1329.4,537.2 1328,542 C1326.6,546.8 1326.8,557.6 1325,561 C1323.2,564.4 1307.5,567.6 1314,569 C1320.5,570.4 1369.1,571.6 1377,572"/>
<path d="M1320,454 C1326.0,453.1 1355.9,448.9 1368,447 C1380.1,445.1 1408.1,438.4 1417,439 C1425.9,439.6 1433.5,448.0 1439,452 C1444.5,456.0 1457.2,465.9 1461,471 C1464.8,476.1 1470.4,478.8 1469,493 C1467.6,507.2 1452.4,573.5 1450,585"/>
<path d="M1382,449 C1381.8,451.0 1379.6,462.2 1380,465 C1380.4,467.8 1384.4,470.2 1385,471"/>
<path d="M1254,453 L1262,485"/>
<path d="M1536,179 C1541.1,180.0 1571.9,184.8 1577,187 C1582.1,189.2 1575.4,194.2 1577,197 C1578.6,199.8 1585.2,206.5 1590,209 C1594.8,211.5 1610.9,214.9 1615,217 C1619.1,219.1 1622.4,223.8 1623,226 C1623.6,228.2 1614.9,233.1 1620,235 C1625.1,236.9 1658.2,239.4 1664,241 C1669.8,242.6 1664.0,245.9 1666,248 C1668.0,250.1 1674.5,256.1 1680,258 C1685.5,259.9 1706.2,261.0 1710,263 C1713.8,265.0 1710.8,270.2 1710,274 C1709.2,277.8 1705.4,289.4 1704,293 C1702.6,296.6 1701.6,301.6 1699,303 C1696.4,304.4 1685.0,303.0 1683,304 C1681.0,305.0 1679.6,309.0 1683,311 C1686.4,313.0 1702.6,317.5 1710,320 C1717.4,322.5 1738.2,328.8 1742,331 C1745.8,333.2 1746.8,336.2 1740,338 C1733.2,339.8 1697.9,343.4 1688,345 C1678.1,346.6 1669.9,348.6 1661,351 C1652.1,353.4 1626.5,363.1 1617,364 C1607.5,364.9 1591.8,359.2 1585,358 C1578.2,356.8 1570.1,354.6 1563,354 C1555.9,353.4 1533.4,351.5 1528,353 C1522.6,354.5 1521.0,363.2 1520,366 C1519.0,368.8 1523.8,374.2 1520,375 C1516.2,375.8 1496.9,373.4 1490,372 C1483.1,370.6 1469.5,364.4 1465,364 C1460.5,363.6 1459.4,368.0 1454,369 C1448.6,370.0 1426.8,370.6 1422,372 C1417.2,373.4 1418.1,379.6 1416,380 C1413.9,380.4 1406.0,375.0 1405,375 C1404.0,375.0 1408.6,377.5 1408,380 C1407.4,382.5 1401.0,393.1 1400,395"/>
<path d="M1363,354 C1366.4,357.8 1386.4,378.0 1390,384 C1393.6,390.0 1392.2,400.8 1392,402 C1391.8,403.2 1386.5,396.9 1388,394 C1389.5,391.1 1400.5,380.8 1404,379 C1407.5,377.2 1414.5,379.9 1416,380"/>
<path d="M1356,309 C1357.0,312.5 1359.6,329.5 1364,337 C1368.4,344.5 1386.5,362.2 1391,369 C1395.5,375.8 1398.9,388.2 1400,391"/>
<path d="M1099,585 C1111.6,588.8 1180.6,613.6 1200,615 C1219.4,616.4 1239.8,600.0 1254,596 C1268.2,592.0 1298.4,585.5 1314,583 C1329.6,580.5 1366.1,576.5 1379,576 C1391.9,575.5 1408.1,577.9 1417,579 C1425.9,580.1 1435.4,580.8 1450,585 C1464.6,589.2 1515.2,607.1 1534,613 C1552.8,618.9 1567.5,621.6 1600,632 C1632.5,642.4 1758.9,687.5 1794,696 C1829.1,704.5 1870.1,699.5 1881,700"/>
<path d="M1200,615 C1193.8,618.1 1162.5,631.9 1150,640 C1137.5,648.1 1114.5,653.6 1100,680 C1085.5,706.4 1053.1,818.0 1034,851 C1014.9,884.0 967.1,921.6 947,944 C926.9,966.4 895.5,1009.1 873,1030 C850.5,1050.9 780.2,1100.9 767,1111"/>
<path d="M1379,576 C1378.9,579.0 1380.8,595.1 1378,600 C1375.2,604.9 1360.2,609.9 1357,615 C1353.8,620.1 1350.6,635.9 1352,641 C1353.4,646.1 1362.5,651.1 1368,656 C1373.5,660.9 1387.5,671.5 1396,680 C1404.5,688.5 1423.1,712.8 1436,724 C1448.9,735.2 1486.8,761.9 1499,770 C1511.2,778.1 1535.4,784.6 1534,789 C1532.6,793.4 1499.9,800.2 1488,805 C1476.1,809.8 1444.8,822.2 1439,827 C1433.2,831.8 1435.5,842.8 1442,843 C1448.5,843.2 1485.2,829.4 1491,829 C1496.8,828.6 1489.4,836.9 1488,840 C1486.6,843.1 1483.4,850.9 1480,854 C1476.6,857.1 1462.0,861.2 1461,865 C1460.0,868.8 1468.0,878.6 1472,884 C1476.0,889.4 1489.0,902.6 1493,908 C1497.0,913.4 1499.5,921.2 1504,927 C1508.5,932.8 1526.6,948.2 1529,954 C1531.4,959.8 1523.4,968.1 1523,973 C1522.6,977.9 1529.1,986.0 1526,993 C1522.9,1000.0 1501.1,1021.9 1498,1029 C1494.9,1036.1 1499.5,1045.5 1501,1050 C1502.5,1054.5 1510.0,1061.8 1510,1065 C1510.0,1068.2 1503.6,1074.0 1501,1076 C1498.4,1078.0 1494.1,1078.9 1489,1081 C1483.9,1083.1 1471.8,1098.4 1460,1093 C1448.2,1087.6 1405.0,1043.8 1395,1038 C1385.0,1032.2 1391.5,1043.6 1380,1047 C1368.5,1050.4 1312.6,1062.8 1303,1065"/>
<path d="M1472,526 C1474.0,522.8 1482.9,503.1 1488,500 C1493.1,496.9 1507.5,499.1 1513,501 C1518.5,502.9 1529.4,509.9 1532,515 C1534.6,520.1 1531.6,535.6 1534,542 C1536.4,548.4 1551.0,557.1 1551,566 C1551.0,574.9 1536.1,607.1 1534,613"/>
<path d="M1495,496 C1495.5,494.6 1495.1,485.8 1499,485 C1502.9,484.2 1522.6,489.4 1526,490"/>
<path d="M1591,591 C1590.4,594.8 1588.6,616.6 1586,621 C1583.4,625.4 1571.4,623.2 1570,626 C1568.6,628.8 1571.2,638.6 1575,643 C1578.8,647.4 1596.9,658.8 1600,661"/>
<path d="M1434,726 C1430.9,729.2 1411.1,747.2 1409,752 C1406.9,756.8 1412.9,759.9 1417,764 C1421.1,768.1 1438.9,782.4 1442,785"/>
<path d="M1439,838 C1436.2,837.6 1424.8,832.5 1417,835 C1409.2,837.5 1385.8,854.1 1377,858 C1368.2,861.9 1350.8,865.0 1347,866"/>
<path d="M1377,859 C1376.6,861.8 1375.8,875.9 1374,881 C1372.2,886.1 1369.8,891.1 1363,900 C1356.2,908.9 1328.9,941.5 1320,952 C1311.1,962.5 1296.8,981.6 1292,984 C1287.2,986.4 1285.6,972.4 1282,971 C1278.4,969.6 1273.2,972.0 1263,973 C1252.8,974.0 1214.0,978.2 1200,979 C1186.0,979.8 1158.9,982.1 1151,979 C1143.1,975.9 1140.8,957.8 1137,954 C1133.2,950.2 1125.8,948.2 1121,949 C1116.2,949.8 1102.5,956.2 1099,960 C1095.5,963.8 1094.0,972.5 1093,979 C1092.0,985.5 1092.2,1006.9 1091,1012 C1089.8,1017.1 1085.8,1020.0 1083,1020 C1080.2,1020.0 1071.1,1016.1 1069,1012 C1066.9,1007.9 1063.6,997.9 1066,987 C1068.4,976.1 1084.8,938.9 1088,925 C1091.2,911.1 1091.4,885.2 1092,876 C1092.6,866.8 1095.2,857.5 1093,851 C1090.8,844.5 1080.8,829.1 1074,824 C1067.2,818.9 1043.4,811.8 1039,810"/>
<path d="M1320,863 C1321.2,865.6 1324.6,879.8 1330,884 C1335.4,888.2 1358.9,895.4 1363,897"/>
<path d="M1290,707 L1311,728"/>
<path d="M1085,797 L1074,824"/>
<path d="M1088,874 C1090.4,874.5 1103.6,874.8 1107,878 C1110.4,881.2 1109.5,896.9 1115,900 C1120.5,903.1 1146.2,900.6 1151,903 C1155.8,905.4 1155.1,914.2 1153,919 C1150.9,923.8 1134.6,937.2 1134,941 C1133.4,944.8 1145.9,944.2 1148,949 C1150.1,953.8 1150.6,975.2 1151,979"/>
<path d="M1292,984 C1291.8,988.2 1288.6,1012.1 1290,1018 C1291.4,1023.9 1302.0,1025.1 1303,1031 C1304.0,1036.9 1298.6,1060.8 1298,1065"/>
<path d="M1239,1058 C1243.2,1054.6 1267.1,1036.0 1273,1031 C1278.9,1026.0 1284.4,1019.6 1286,1018"/>
<path d="M1249.6,985 C1251.9,983.2 1264.3,973.0 1268.2,971 C1272.1,969.0 1277.9,968.0 1280.6,969.4 C1283.3,970.8 1288.4,977.6 1289.9,981.9 C1291.5,986.2 1291.4,999.3 1293,1003.6 C1294.6,1007.9 1302.0,1012.9 1302.4,1016 C1302.8,1019.1 1298.0,1026.1 1296.1,1028.4 C1294.1,1030.7 1286.4,1032.4 1286.8,1034.7 C1287.2,1037.0 1297.3,1043.6 1299.3,1047.1 C1301.2,1050.6 1304.7,1060.8 1302.4,1062.6 C1300.1,1064.3 1284.1,1062.1 1280.6,1061.1 C1277.1,1060.1 1275.2,1055.6 1274.4,1054.8"/>
<path d="M1265.1,997.4 C1265.5,995.1 1266.7,981.9 1268.2,978.8 C1269.8,975.7 1275.6,971.7 1277.5,972.5 C1279.4,973.3 1282.5,981.5 1283.7,985 C1284.9,988.5 1288.0,998.6 1286.8,1000.5 C1285.6,1002.4 1276.0,1000.5 1274.4,1000.5"/>
<path d="M1007,853 C1011.4,848.0 1035.2,821.8 1042,813 C1048.8,804.2 1054.6,796.2 1061,783 C1067.4,769.8 1084.5,719.9 1093,707 C1101.5,694.1 1124.5,683.4 1129,680"/>
<path d="M1036,680 C1037.8,681.8 1043.1,686.8 1050,694 C1056.9,701.2 1085.9,732.5 1091,738"/>
<path d="M1045,702 C1043.9,707.1 1036.0,737.9 1036,743 C1036.0,748.1 1043.9,743.0 1045,743"/>
<path d="M1042,696 L1054,721"/>
<path d="M450,772 C454.6,773.1 475.9,777.2 487,781 C498.1,784.8 528.9,798.6 539,802 C549.1,805.4 553.1,805.9 568,808 C582.9,810.1 641.6,818.1 658,819 C674.4,819.9 687.1,817.4 699,815 C710.9,812.6 740.4,803.0 753,800 C765.6,797.0 779.9,795.8 800,791 C820.1,786.2 898.0,767.0 914,762 C930.0,757.0 922.2,757.1 928,751 C933.8,744.9 948.9,717.8 960,713 C971.1,708.2 1008.1,714.4 1017,713 C1025.9,711.6 1028.2,704.1 1031,702 C1033.8,699.9 1038.0,696.8 1039,696"/>
<path d="M879,1023 C880.1,1023.9 887.0,1025.4 888,1030 C889.0,1034.6 886.5,1054.1 887,1060 C887.5,1065.9 890.0,1072.9 892,1077 C894.0,1081.1 901.6,1091.0 903,1093"/>
<path d="M1683,770 C1686.2,771.4 1701.8,780.9 1709,781 C1716.2,781.1 1730.1,776.5 1741,771 C1751.9,765.5 1786.5,744.6 1796,737 C1805.5,729.4 1813.6,713.8 1817,710 C1820.4,706.2 1813.1,701.1 1823,707 C1832.9,712.9 1886.9,750.8 1896,757"/>
<path d="M1898,775 C1893.0,781.5 1863.2,815.8 1858,827 C1852.8,838.2 1861.8,851.1 1856,865 C1850.2,878.9 1821.9,923.4 1812,938 C1802.1,952.6 1784.0,970.5 1777,982 C1770.0,993.5 1762.1,1019.6 1756,1030 C1749.9,1040.4 1734.1,1057.1 1728,1065 C1721.9,1072.9 1711.4,1089.0 1707,1093 C1702.6,1097.0 1697.2,1097.2 1693,1097 C1688.8,1096.8 1677.1,1091.0 1673,1091 C1668.9,1091.0 1663.5,1096.9 1660,1097 C1656.5,1097.1 1650.9,1090.9 1645,1092 C1639.1,1093.1 1617.0,1104.2 1613,1106"/>
<path d="M1798,696 C1801.5,696.4 1816.4,699.5 1826,699 C1835.6,698.5 1867.2,691.1 1875,692 C1882.8,692.9 1886.4,704.2 1888,706"/>
<path d="M1817,710 C1817.4,711.0 1821.0,716.0 1820,718 C1819.0,720.0 1810.4,725.0 1809,726"/>
<path d="M1700.3,485.1 C1699.6,483.2 1694.0,473.2 1694.7,470.2 C1695.4,467.2 1702.2,462.8 1705.9,460.9 C1709.6,459.0 1721.9,456.9 1724.5,455.3 C1727.1,453.7 1725.9,448.1 1726.4,447.9 C1726.9,447.7 1723.9,452.5 1728.3,453.4 C1732.7,454.3 1754.3,455.9 1761.8,455.3 C1769.2,454.7 1780.9,447.6 1787.9,448.8 C1794.9,450.0 1809.3,460.5 1817.7,464.6 C1826.1,468.7 1845.7,476.3 1855,481.4 C1864.3,486.5 1886.6,500.7 1892.2,505.6 C1897.8,510.5 1899.0,515.4 1899.7,520.5 C1900.4,525.6 1897.8,541.0 1897.8,546.6 C1897.8,552.2 1900.2,561.0 1899.7,565.2 C1899.2,569.4 1897.4,574.5 1894.1,580.1 C1890.8,585.7 1879.7,601.9 1873.6,610 C1867.5,618.1 1851.8,639.0 1845.6,645 C1839.4,651.0 1826.7,656.4 1824,658"/>
<path d="M1821.4,496.3 C1823.0,498.9 1832.4,511.9 1834.5,516.8 C1836.6,521.7 1835.0,530.7 1838.2,535.4 C1841.5,540.1 1857.5,549.9 1860.5,554.1 C1863.5,558.3 1863.1,565.3 1862.4,569 C1861.7,572.7 1858.3,578.8 1855,583.9 C1851.7,589.0 1840.5,604.4 1836.3,610 C1832.1,615.6 1824.4,624.2 1821.4,628.6 C1818.4,633.0 1813.3,643.0 1812.1,645"/>
<path d="M1787.9,429.2 C1788.4,430.8 1791.6,439.9 1791.6,442.3 C1791.6,444.8 1788.4,448.0 1787.9,448.8"/>
<path d="M1851,450 L1898,443"/>
<path d="M1855,481.4 C1858.2,480.7 1875.4,477.9 1881,475.8 C1886.6,473.7 1897.4,466.0 1899.7,464.6"/>
<path d="M1819,541 C1818.0,554.8 1811.0,632.9 1811,651 C1811.0,669.1 1818.0,681.6 1819,686"/>
<path d="M1819.6,555.9 C1823.5,556.6 1847.0,559.4 1851.2,561.5 C1855.4,563.6 1852.9,571.3 1853.1,572.7"/>
<path d="M1819,566 L1896,579"/>
<path d="M1640,527 C1640.6,530.4 1641.2,547.9 1645,554 C1648.8,560.1 1660.8,569.8 1670,576 C1679.2,582.2 1711.0,599.0 1719,604 C1727.0,609.0 1729.0,613.6 1734,616 C1739.0,618.4 1750.9,618.4 1759,623 C1767.1,627.6 1790.9,648.2 1799,653 C1807.1,657.8 1818.4,661.0 1824,661 C1829.6,661.0 1839.4,648.4 1844,653 C1848.6,657.6 1858.9,692.4 1861,698"/>
<path d="M1620,671 C1622.5,671.0 1636.0,670.1 1640,671 C1644.0,671.9 1650.5,677.1 1652,678"/>
<path d="M1620,584 L1630,589"/>
<path d="M1847,777 C1847.8,776.4 1849.5,772.2 1853,772 C1856.5,771.8 1870.9,774.4 1875,775 C1879.1,775.6 1883.4,777.0 1886,777 C1888.6,777.0 1895.4,773.5 1896,775 C1896.6,776.5 1894.0,787.2 1891,789 C1888.0,790.8 1877.0,789.8 1872,789 C1867.0,788.2 1854.1,784.5 1851,783 C1847.9,781.5 1847.5,777.8 1847,777"/>
<path d="M1858,774 L1856,786"/>
<path d="M1868,776 L1866,788"/>
<path d="M1850,780 L1889,782"/>
<path d="M1876,775 C1876.9,774.1 1881.2,768.9 1883,768 C1884.8,767.1 1889.1,768.0 1890,768"/>
</g>
<g fill="none" stroke="#b8b7b0" stroke-width="1.8" stroke-dasharray="0.01 2.7" stroke-linecap="round">
<path d="M530,177 C529.5,177.8 526.1,181.1 526,183 C525.9,184.9 528.0,190.2 529,192 C530.0,193.8 533.4,195.2 534,197 C534.6,198.8 532.5,204.5 534,206 C535.5,207.5 542.1,208.2 546,209 C549.9,209.8 560.8,210.6 565,212 C569.2,213.4 577.8,218.2 580,220 C582.2,221.8 580.6,224.5 583,226 C585.4,227.5 595.5,231.0 599,232 C602.5,233.0 609.1,233.0 611,234 C612.9,235.0 611.9,239.8 614,240 C616.1,240.2 626.0,235.0 628,236 C630.0,237.0 628.2,245.0 630,248 C631.8,251.0 637.4,258.2 642,260 C646.6,261.8 664.6,263.5 667,262 C669.4,260.5 661.4,250.9 661,248 C660.6,245.1 661.6,241.0 664,239 C666.4,237.0 672.2,232.9 680,232 C687.8,231.1 714.4,231.1 726,232 C737.6,232.9 765.6,237.4 773,239 C780.4,240.6 782.4,244.9 785,245 C787.6,245.1 791.6,239.6 794,240 C796.4,240.4 798.9,246.0 804,248 C809.1,250.0 827.6,255.8 835,256 C842.4,256.2 858.8,250.2 863,250 C867.2,249.8 863.2,253.1 869,254 C874.8,254.9 899.8,254.5 909,257 C918.2,259.5 939.9,270.9 943,274 C946.1,277.1 932.8,279.0 934,282 C935.2,285.0 949.5,295.1 953,298 C956.5,300.9 959.8,305.4 962,305 C964.2,304.6 966.2,296.1 971,295 C975.8,293.9 994.6,296.6 1000,296 C1005.4,295.4 1010.6,289.8 1014,290 C1017.4,290.2 1024.0,297.6 1027,298 C1030.0,298.4 1034.9,293.0 1038,293 C1041.1,293.0 1048.6,295.2 1052,298 C1055.4,300.8 1062.4,312.9 1065,315 C1067.6,317.1 1070.9,314.0 1073,315 C1075.1,316.0 1080.2,321.0 1082,323 C1083.8,325.0 1085.8,329.2 1087,331 C1088.2,332.8 1087.2,336.0 1092,337 C1096.8,338.0 1120.5,337.8 1125,339 C1129.5,340.2 1126.2,344.2 1128,347 C1129.8,349.8 1136.4,359.6 1139,361 C1141.6,362.4 1146.4,360.4 1149,358 C1151.6,355.6 1157.6,344.4 1160,342 C1162.4,339.6 1167.0,338.0 1168,339 C1169.0,340.0 1168.6,345.5 1168,350 C1167.4,354.5 1165.6,368.9 1163,375 C1160.4,381.1 1149.0,394.6 1147,399 C1145.0,403.4 1145.0,407.2 1147,410 C1149.0,412.8 1159.2,419.5 1163,421 C1166.8,422.5 1173.9,423.0 1177,422 C1180.1,421.0 1185.6,415.9 1188,413 C1190.4,410.1 1195.4,402.8 1196,399 C1196.6,395.2 1191.6,388.4 1193,383 C1194.4,377.6 1205.2,359.4 1207,356"/>
<path d="M471,359 C472.1,359.6 473.0,361.5 480,364 C487.0,366.5 517.0,377.0 527,379 C537.0,381.0 553.8,379.6 560,380 C566.2,380.4 573.2,381.0 577,382 C580.8,383.0 584.9,385.1 590,388 C595.1,390.9 613.6,402.0 618,405 C622.4,408.0 622.2,410.5 625,412 C627.8,413.5 636.8,416.1 640,417 C643.2,417.9 648.5,418.2 651,419 C653.5,419.8 654.9,419.6 660,423 C665.1,426.4 684.2,440.2 692,446 C699.8,451.8 716.0,465.6 722,469 C728.0,472.4 735.6,472.2 740,473 C744.4,473.8 752.0,473.2 757,475 C762.0,476.8 774.6,483.8 780,487 C785.4,490.2 786.6,496.1 800,501 C813.4,505.9 869.4,519.9 887,526 C904.6,532.1 930.1,543.2 941,550 C951.9,556.8 966.6,574.4 974,580 C981.4,585.6 994.6,593.5 1000,595 C1005.4,596.5 1010.6,592.5 1017,592 C1023.4,591.5 1042.8,592.1 1051,591 C1059.2,589.9 1077.0,583.8 1083,583 C1089.0,582.2 1097.0,584.8 1099,585"/>
<path d="M1000,595 C1000.6,596.5 1004.8,602.8 1005,607 C1005.2,611.2 1002.4,623.9 1002,629 C1001.6,634.1 1000.8,643.6 1002,648 C1003.2,652.4 1009.1,660.0 1012,664 C1014.9,668.0 1022.0,676.1 1025,680 C1028.0,683.9 1034.6,693.1 1036,695"/>
<path d="M1051,591 C1055.6,593.4 1079.0,605.2 1088,610 C1097.0,614.8 1118.6,626.6 1123,629"/>
<path d="M1017,592 C1018.8,583.0 1028.2,530.4 1031,520 C1033.8,509.6 1036.6,512.8 1039,509 C1041.4,505.2 1046.2,493.9 1050,490 C1053.8,486.1 1066.6,479.5 1069,478"/>
<path d="M1031,531 L1051,590"/>
<path d="M1051,589 L1064,568"/>
<path d="M998,336 C1000.9,336.5 1016.5,338.9 1021,340 C1025.5,341.1 1032.1,342.1 1034,345 C1035.9,347.9 1034.6,360.1 1036,363 C1037.4,365.9 1043.6,364.6 1045,368 C1046.4,371.4 1047.2,381.9 1047,390 C1046.8,398.1 1041.2,423.1 1043,433 C1044.8,442.9 1056.0,460.9 1061,469 C1066.0,477.1 1079.0,492.6 1083,498 C1087.0,503.4 1089.6,509.9 1093,512 C1096.4,514.1 1106.2,514.4 1110,515 C1113.8,515.6 1119.2,514.2 1123,517 C1126.8,519.8 1137.9,534.5 1140,537"/>
<path d="M1110,509 C1112.0,506.6 1119.2,494.9 1126,490 C1132.8,485.1 1154.4,473.9 1164,470 C1173.6,466.1 1196.0,459.2 1203,459 C1210.0,458.8 1216.6,465.6 1220,468 C1223.4,470.4 1228.4,475.0 1230,478 C1231.6,481.0 1232.6,490.2 1233,492"/>
<path d="M1163,470 C1163.1,465.5 1162.9,440.0 1164,434 C1165.1,428.0 1170.6,425.9 1172,422 C1173.4,418.1 1173.5,407.1 1175,403 C1176.5,398.9 1182.8,392.9 1184,389 C1185.2,385.1 1182.2,376.5 1185,372 C1187.8,367.5 1203.4,355.4 1206,353"/>
<path d="M1250,288 C1247.5,290.2 1231.2,302.8 1230,306 C1228.8,309.2 1238.1,312.4 1240,314 C1241.9,315.6 1245.0,317.8 1245,319 C1245.0,320.2 1240.1,321.1 1240,324 C1239.9,326.9 1242.1,339.1 1244,342 C1245.9,344.9 1253.8,345.6 1255,347 C1256.2,348.4 1255.9,351.5 1254,353 C1252.1,354.5 1243.9,358.1 1240,359 C1236.1,359.9 1227.2,360.8 1223,360 C1218.8,359.2 1208.1,353.9 1206,353"/>
<path d="M1206,353 C1204.8,355.9 1197.5,371.2 1196,376 C1194.5,380.8 1194.0,387.9 1194,391 C1194.0,394.1 1198.4,397.1 1196,401 C1193.6,404.9 1181.2,421.1 1175,422 C1168.8,422.9 1149.6,410.8 1146,408 C1142.4,405.2 1144.0,403.4 1146,400 C1148.0,396.6 1159.2,387.6 1162,381 C1164.8,374.4 1167.6,352.4 1168,347 C1168.4,341.6 1167.1,337.9 1165,338 C1162.9,338.1 1153.8,345.2 1151,348 C1148.2,350.8 1146.1,360.0 1143,360 C1139.9,360.0 1128.4,350.5 1126,348 C1123.6,345.5 1124.2,341.0 1124,340"/>
<path d="M1194,377 L1245,380"/>
<path d="M1213,381 C1216.0,381.6 1231.9,383.6 1237,386 C1242.1,388.4 1251.8,396.6 1254,400 C1256.2,403.4 1255.9,410.2 1255,413 C1254.1,415.8 1247.6,419.9 1247,422 C1246.4,424.1 1247.2,428.2 1250,430 C1252.8,431.8 1266.0,436.0 1269,436 C1272.0,436.0 1273.1,433.8 1274,430 C1274.9,426.2 1272.5,410.9 1276,406 C1279.5,401.1 1298.4,394.4 1302,391 C1305.6,387.6 1304.4,381.4 1305,379 C1305.6,376.6 1304.6,372.4 1307,372 C1309.4,371.6 1318.9,377.2 1324,376 C1329.1,374.8 1342.6,364.6 1348,362 C1353.4,359.4 1362.8,353.2 1367,355 C1371.2,356.8 1378.6,371.8 1382,376 C1385.4,380.2 1393.0,385.9 1394,389 C1395.0,392.1 1388.8,400.8 1390,401 C1391.2,401.2 1401.8,394.1 1404,391 C1406.2,387.9 1406.0,377.5 1408,376 C1410.0,374.5 1418.5,378.6 1420,379"/>
<path d="M1332,321 C1329.9,323.4 1317.2,334.9 1315,340 C1312.8,345.1 1315.5,357.1 1314,362 C1312.5,366.9 1304.4,376.9 1303,379"/>
<path d="M1360,355 C1359.5,351.1 1354.8,329.5 1356,324 C1357.2,318.5 1362.0,312.5 1370,311 C1378.0,309.5 1411.1,312.4 1420,312 C1428.9,311.6 1432.2,308.4 1441,308 C1449.8,307.6 1480.9,307.0 1490,309 C1499.1,311.0 1504.9,321.9 1514,324 C1523.1,326.1 1553.5,323.1 1563,326 C1572.5,328.9 1583.9,344.0 1590,347 C1596.1,350.0 1608.6,348.6 1612,350 C1615.4,351.4 1616.4,357.0 1617,358"/>
<path d="M1312,383 C1312.9,385.9 1317.4,402.4 1319,406 C1320.6,409.6 1325.0,408.5 1325,412 C1325.0,415.5 1320.4,429.1 1319,434 C1317.6,438.9 1315.4,447.6 1314,451 C1312.6,454.4 1306.6,458.2 1308,461 C1309.4,463.8 1319.4,470.0 1325,473 C1330.6,476.0 1348.2,482.9 1353,485 C1357.8,487.1 1362.4,485.6 1363,490 C1363.6,494.4 1361.4,515.9 1358,520 C1354.6,524.1 1339.8,520.2 1336,523 C1332.2,525.8 1329.4,537.2 1328,542 C1326.6,546.8 1326.8,557.6 1325,561 C1323.2,564.4 1307.5,567.6 1314,569 C1320.5,570.4 1369.1,571.6 1377,572"/>
<path d="M1320,454 C1326.0,453.1 1355.9,448.9 1368,447 C1380.1,445.1 1408.1,438.4 1417,439 C1425.9,439.6 1433.5,448.0 1439,452 C1444.5,456.0 1457.2,465.9 1461,471 C1464.8,476.1 1470.4,478.8 1469,493 C1467.6,507.2 1452.4,573.5 1450,585"/>
<path d="M1382,449 C1381.8,451.0 1379.6,462.2 1380,465 C1380.4,467.8 1384.4,470.2 1385,471"/>
<path d="M1254,453 L1262,485"/>
<path d="M1536,179 C1541.1,180.0 1571.9,184.8 1577,187 C1582.1,189.2 1575.4,194.2 1577,197 C1578.6,199.8 1585.2,206.5 1590,209 C1594.8,211.5 1610.9,214.9 1615,217 C1619.1,219.1 1622.4,223.8 1623,226 C1623.6,228.2 1614.9,233.1 1620,235 C1625.1,236.9 1658.2,239.4 1664,241 C1669.8,242.6 1664.0,245.9 1666,248 C1668.0,250.1 1674.5,256.1 1680,258 C1685.5,259.9 1706.2,261.0 1710,263 C1713.8,265.0 1710.8,270.2 1710,274 C1709.2,277.8 1705.4,289.4 1704,293 C1702.6,296.6 1701.6,301.6 1699,303 C1696.4,304.4 1685.0,303.0 1683,304 C1681.0,305.0 1679.6,309.0 1683,311 C1686.4,313.0 1702.6,317.5 1710,320 C1717.4,322.5 1738.2,328.8 1742,331 C1745.8,333.2 1746.8,336.2 1740,338 C1733.2,339.8 1697.9,343.4 1688,345 C1678.1,346.6 1669.9,348.6 1661,351 C1652.1,353.4 1626.5,363.1 1617,364 C1607.5,364.9 1591.8,359.2 1585,358 C1578.2,356.8 1570.1,354.6 1563,354 C1555.9,353.4 1533.4,351.5 1528,353 C1522.6,354.5 1521.0,363.2 1520,366 C1519.0,368.8 1523.8,374.2 1520,375 C1516.2,375.8 1496.9,373.4 1490,372 C1483.1,370.6 1469.5,364.4 1465,364 C1460.5,363.6 1459.4,368.0 1454,369 C1448.6,370.0 1426.8,370.6 1422,372 C1417.2,373.4 1418.1,379.6 1416,380 C1413.9,380.4 1406.0,375.0 1405,375 C1404.0,375.0 1408.6,377.5 1408,380 C1407.4,382.5 1401.0,393.1 1400,395"/>
<path d="M1363,354 C1366.4,357.8 1386.4,378.0 1390,384 C1393.6,390.0 1392.2,400.8 1392,402 C1391.8,403.2 1386.5,396.9 1388,394 C1389.5,391.1 1400.5,380.8 1404,379 C1407.5,377.2 1414.5,379.9 1416,380"/>
<path d="M1356,309 C1357.0,312.5 1359.6,329.5 1364,337 C1368.4,344.5 1386.5,362.2 1391,369 C1395.5,375.8 1398.9,388.2 1400,391"/>
<path d="M1099,585 C1111.6,588.8 1180.6,613.6 1200,615 C1219.4,616.4 1239.8,600.0 1254,596 C1268.2,592.0 1298.4,585.5 1314,583 C1329.6,580.5 1366.1,576.5 1379,576 C1391.9,575.5 1408.1,577.9 1417,579 C1425.9,580.1 1435.4,580.8 1450,585 C1464.6,589.2 1515.2,607.1 1534,613 C1552.8,618.9 1567.5,621.6 1600,632 C1632.5,642.4 1758.9,687.5 1794,696 C1829.1,704.5 1870.1,699.5 1881,700"/>
<path d="M1200,615 C1193.8,618.1 1162.5,631.9 1150,640 C1137.5,648.1 1114.5,653.6 1100,680 C1085.5,706.4 1053.1,818.0 1034,851 C1014.9,884.0 967.1,921.6 947,944 C926.9,966.4 895.5,1009.1 873,1030 C850.5,1050.9 780.2,1100.9 767,1111"/>
<path d="M1379,576 C1378.9,579.0 1380.8,595.1 1378,600 C1375.2,604.9 1360.2,609.9 1357,615 C1353.8,620.1 1350.6,635.9 1352,641 C1353.4,646.1 1362.5,651.1 1368,656 C1373.5,660.9 1387.5,671.5 1396,680 C1404.5,688.5 1423.1,712.8 1436,724 C1448.9,735.2 1486.8,761.9 1499,770 C1511.2,778.1 1535.4,784.6 1534,789 C1532.6,793.4 1499.9,800.2 1488,805 C1476.1,809.8 1444.8,822.2 1439,827 C1433.2,831.8 1435.5,842.8 1442,843 C1448.5,843.2 1485.2,829.4 1491,829 C1496.8,828.6 1489.4,836.9 1488,840 C1486.6,843.1 1483.4,850.9 1480,854 C1476.6,857.1 1462.0,861.2 1461,865 C1460.0,868.8 1468.0,878.6 1472,884 C1476.0,889.4 1489.0,902.6 1493,908 C1497.0,913.4 1499.5,921.2 1504,927 C1508.5,932.8 1526.6,948.2 1529,954 C1531.4,959.8 1523.4,968.1 1523,973 C1522.6,977.9 1529.1,986.0 1526,993 C1522.9,1000.0 1501.1,1021.9 1498,1029 C1494.9,1036.1 1499.5,1045.5 1501,1050 C1502.5,1054.5 1510.0,1061.8 1510,1065 C1510.0,1068.2 1503.6,1074.0 1501,1076 C1498.4,1078.0 1494.1,1078.9 1489,1081 C1483.9,1083.1 1471.8,1098.4 1460,1093 C1448.2,1087.6 1405.0,1043.8 1395,1038 C1385.0,1032.2 1391.5,1043.6 1380,1047 C1368.5,1050.4 1312.6,1062.8 1303,1065"/>
<path d="M1472,526 C1474.0,522.8 1482.9,503.1 1488,500 C1493.1,496.9 1507.5,499.1 1513,501 C1518.5,502.9 1529.4,509.9 1532,515 C1534.6,520.1 1531.6,535.6 1534,542 C1536.4,548.4 1551.0,557.1 1551,566 C1551.0,574.9 1536.1,607.1 1534,613"/>
<path d="M1495,496 C1495.5,494.6 1495.1,485.8 1499,485 C1502.9,484.2 1522.6,489.4 1526,490"/>
<path d="M1591,591 C1590.4,594.8 1588.6,616.6 1586,621 C1583.4,625.4 1571.4,623.2 1570,626 C1568.6,628.8 1571.2,638.6 1575,643 C1578.8,647.4 1596.9,658.8 1600,661"/>
<path d="M1434,726 C1430.9,729.2 1411.1,747.2 1409,752 C1406.9,756.8 1412.9,759.9 1417,764 C1421.1,768.1 1438.9,782.4 1442,785"/>
<path d="M1439,838 C1436.2,837.6 1424.8,832.5 1417,835 C1409.2,837.5 1385.8,854.1 1377,858 C1368.2,861.9 1350.8,865.0 1347,866"/>
<path d="M1377,859 C1376.6,861.8 1375.8,875.9 1374,881 C1372.2,886.1 1369.8,891.1 1363,900 C1356.2,908.9 1328.9,941.5 1320,952 C1311.1,962.5 1296.8,981.6 1292,984 C1287.2,986.4 1285.6,972.4 1282,971 C1278.4,969.6 1273.2,972.0 1263,973 C1252.8,974.0 1214.0,978.2 1200,979 C1186.0,979.8 1158.9,982.1 1151,979 C1143.1,975.9 1140.8,957.8 1137,954 C1133.2,950.2 1125.8,948.2 1121,949 C1116.2,949.8 1102.5,956.2 1099,960 C1095.5,963.8 1094.0,972.5 1093,979 C1092.0,985.5 1092.2,1006.9 1091,1012 C1089.8,1017.1 1085.8,1020.0 1083,1020 C1080.2,1020.0 1071.1,1016.1 1069,1012 C1066.9,1007.9 1063.6,997.9 1066,987 C1068.4,976.1 1084.8,938.9 1088,925 C1091.2,911.1 1091.4,885.2 1092,876 C1092.6,866.8 1095.2,857.5 1093,851 C1090.8,844.5 1080.8,829.1 1074,824 C1067.2,818.9 1043.4,811.8 1039,810"/>
<path d="M1320,863 C1321.2,865.6 1324.6,879.8 1330,884 C1335.4,888.2 1358.9,895.4 1363,897"/>
<path d="M1290,707 L1311,728"/>
<path d="M1085,797 L1074,824"/>
<path d="M1088,874 C1090.4,874.5 1103.6,874.8 1107,878 C1110.4,881.2 1109.5,896.9 1115,900 C1120.5,903.1 1146.2,900.6 1151,903 C1155.8,905.4 1155.1,914.2 1153,919 C1150.9,923.8 1134.6,937.2 1134,941 C1133.4,944.8 1145.9,944.2 1148,949 C1150.1,953.8 1150.6,975.2 1151,979"/>
<path d="M1292,984 C1291.8,988.2 1288.6,1012.1 1290,1018 C1291.4,1023.9 1302.0,1025.1 1303,1031 C1304.0,1036.9 1298.6,1060.8 1298,1065"/>
<path d="M1239,1058 C1243.2,1054.6 1267.1,1036.0 1273,1031 C1278.9,1026.0 1284.4,1019.6 1286,1018"/>
<path d="M1249.6,985 C1251.9,983.2 1264.3,973.0 1268.2,971 C1272.1,969.0 1277.9,968.0 1280.6,969.4 C1283.3,970.8 1288.4,977.6 1289.9,981.9 C1291.5,986.2 1291.4,999.3 1293,1003.6 C1294.6,1007.9 1302.0,1012.9 1302.4,1016 C1302.8,1019.1 1298.0,1026.1 1296.1,1028.4 C1294.1,1030.7 1286.4,1032.4 1286.8,1034.7 C1287.2,1037.0 1297.3,1043.6 1299.3,1047.1 C1301.2,1050.6 1304.7,1060.8 1302.4,1062.6 C1300.1,1064.3 1284.1,1062.1 1280.6,1061.1 C1277.1,1060.1 1275.2,1055.6 1274.4,1054.8"/>
<path d="M1265.1,997.4 C1265.5,995.1 1266.7,981.9 1268.2,978.8 C1269.8,975.7 1275.6,971.7 1277.5,972.5 C1279.4,973.3 1282.5,981.5 1283.7,985 C1284.9,988.5 1288.0,998.6 1286.8,1000.5 C1285.6,1002.4 1276.0,1000.5 1274.4,1000.5"/>
<path d="M1007,853 C1011.4,848.0 1035.2,821.8 1042,813 C1048.8,804.2 1054.6,796.2 1061,783 C1067.4,769.8 1084.5,719.9 1093,707 C1101.5,694.1 1124.5,683.4 1129,680"/>
<path d="M1036,680 C1037.8,681.8 1043.1,686.8 1050,694 C1056.9,701.2 1085.9,732.5 1091,738"/>
<path d="M1045,702 C1043.9,707.1 1036.0,737.9 1036,743 C1036.0,748.1 1043.9,743.0 1045,743"/>
<path d="M1042,696 L1054,721"/>
<path d="M450,772 C454.6,773.1 475.9,777.2 487,781 C498.1,784.8 528.9,798.6 539,802 C549.1,805.4 553.1,805.9 568,808 C582.9,810.1 641.6,818.1 658,819 C674.4,819.9 687.1,817.4 699,815 C710.9,812.6 740.4,803.0 753,800 C765.6,797.0 779.9,795.8 800,791 C820.1,786.2 898.0,767.0 914,762 C930.0,757.0 922.2,757.1 928,751 C933.8,744.9 948.9,717.8 960,713 C971.1,708.2 1008.1,714.4 1017,713 C1025.9,711.6 1028.2,704.1 1031,702 C1033.8,699.9 1038.0,696.8 1039,696"/>
<path d="M879,1023 C880.1,1023.9 887.0,1025.4 888,1030 C889.0,1034.6 886.5,1054.1 887,1060 C887.5,1065.9 890.0,1072.9 892,1077 C894.0,1081.1 901.6,1091.0 903,1093"/>
<path d="M1683,770 C1686.2,771.4 1701.8,780.9 1709,781 C1716.2,781.1 1730.1,776.5 1741,771 C1751.9,765.5 1786.5,744.6 1796,737 C1805.5,729.4 1813.6,713.8 1817,710 C1820.4,706.2 1813.1,701.1 1823,707 C1832.9,712.9 1886.9,750.8 1896,757"/>
<path d="M1898,775 C1893.0,781.5 1863.2,815.8 1858,827 C1852.8,838.2 1861.8,851.1 1856,865 C1850.2,878.9 1821.9,923.4 1812,938 C1802.1,952.6 1784.0,970.5 1777,982 C1770.0,993.5 1762.1,1019.6 1756,1030 C1749.9,1040.4 1734.1,1057.1 1728,1065 C1721.9,1072.9 1711.4,1089.0 1707,1093 C1702.6,1097.0 1697.2,1097.2 1693,1097 C1688.8,1096.8 1677.1,1091.0 1673,1091 C1668.9,1091.0 1663.5,1096.9 1660,1097 C1656.5,1097.1 1650.9,1090.9 1645,1092 C1639.1,1093.1 1617.0,1104.2 1613,1106"/>
<path d="M1798,696 C1801.5,696.4 1816.4,699.5 1826,699 C1835.6,698.5 1867.2,691.1 1875,692 C1882.8,692.9 1886.4,704.2 1888,706"/>
<path d="M1817,710 C1817.4,711.0 1821.0,716.0 1820,718 C1819.0,720.0 1810.4,725.0 1809,726"/>
<path d="M1700.3,485.1 C1699.6,483.2 1694.0,473.2 1694.7,470.2 C1695.4,467.2 1702.2,462.8 1705.9,460.9 C1709.6,459.0 1721.9,456.9 1724.5,455.3 C1727.1,453.7 1725.9,448.1 1726.4,447.9 C1726.9,447.7 1723.9,452.5 1728.3,453.4 C1732.7,454.3 1754.3,455.9 1761.8,455.3 C1769.2,454.7 1780.9,447.6 1787.9,448.8 C1794.9,450.0 1809.3,460.5 1817.7,464.6 C1826.1,468.7 1845.7,476.3 1855,481.4 C1864.3,486.5 1886.6,500.7 1892.2,505.6 C1897.8,510.5 1899.0,515.4 1899.7,520.5 C1900.4,525.6 1897.8,541.0 1897.8,546.6 C1897.8,552.2 1900.2,561.0 1899.7,565.2 C1899.2,569.4 1897.4,574.5 1894.1,580.1 C1890.8,585.7 1879.7,601.9 1873.6,610 C1867.5,618.1 1851.8,639.0 1845.6,645 C1839.4,651.0 1826.7,656.4 1824,658"/>
<path d="M1821.4,496.3 C1823.0,498.9 1832.4,511.9 1834.5,516.8 C1836.6,521.7 1835.0,530.7 1838.2,535.4 C1841.5,540.1 1857.5,549.9 1860.5,554.1 C1863.5,558.3 1863.1,565.3 1862.4,569 C1861.7,572.7 1858.3,578.8 1855,583.9 C1851.7,589.0 1840.5,604.4 1836.3,610 C1832.1,615.6 1824.4,624.2 1821.4,628.6 C1818.4,633.0 1813.3,643.0 1812.1,645"/>
<path d="M1787.9,429.2 C1788.4,430.8 1791.6,439.9 1791.6,442.3 C1791.6,444.8 1788.4,448.0 1787.9,448.8"/>
<path d="M1851,450 L1898,443"/>
<path d="M1855,481.4 C1858.2,480.7 1875.4,477.9 1881,475.8 C1886.6,473.7 1897.4,466.0 1899.7,464.6"/>
<path d="M1819,541 C1818.0,554.8 1811.0,632.9 1811,651 C1811.0,669.1 1818.0,681.6 1819,686"/>
<path d="M1819.6,555.9 C1823.5,556.6 1847.0,559.4 1851.2,561.5 C1855.4,563.6 1852.9,571.3 1853.1,572.7"/>
<path d="M1819,566 L1896,579"/>
<path d="M1640,527 C1640.6,530.4 1641.2,547.9 1645,554 C1648.8,560.1 1660.8,569.8 1670,576 C1679.2,582.2 1711.0,599.0 1719,604 C1727.0,609.0 1729.0,613.6 1734,616 C1739.0,618.4 1750.9,618.4 1759,623 C1767.1,627.6 1790.9,648.2 1799,653 C1807.1,657.8 1818.4,661.0 1824,661 C1829.6,661.0 1839.4,648.4 1844,653 C1848.6,657.6 1858.9,692.4 1861,698"/>
<path d="M1620,671 C1622.5,671.0 1636.0,670.1 1640,671 C1644.0,671.9 1650.5,677.1 1652,678"/>
<path d="M1620,584 L1630,589"/>
<path d="M1847,777 C1847.8,776.4 1849.5,772.2 1853,772 C1856.5,771.8 1870.9,774.4 1875,775 C1879.1,775.6 1883.4,777.0 1886,777 C1888.6,777.0 1895.4,773.5 1896,775 C1896.6,776.5 1894.0,787.2 1891,789 C1888.0,790.8 1877.0,789.8 1872,789 C1867.0,788.2 1854.1,784.5 1851,783 C1847.9,781.5 1847.5,777.8 1847,777"/>
<path d="M1858,774 L1856,786"/>
<path d="M1868,776 L1866,788"/>
<path d="M1850,780 L1889,782"/>
<path d="M1876,775 C1876.9,774.1 1881.2,768.9 1883,768 C1884.8,767.1 1889.1,768.0 1890,768"/>
</g>
<ellipse cx="1760.7" cy="435" rx="9" ry="6.7" fill="#fff" stroke="#9aa0c8" stroke-width="0.8"/>
<ellipse cx="1871.3" cy="472.1" rx="4.5" ry="4" fill="#fff" stroke="#9aa0c8" stroke-width="0.6"/>
<g fill="url(#wdots)" stroke="#1d2f6a" stroke-width="0.8">
<polygon points="1556,411 1564,422 1565,431 1559,428 1556,420"/>
<polygon points="1434,550 1442,566 1436,569 1432,566"/>
<polygon points="1420,452 1428,456 1424,450"/>
<polygon points="1589,581 1600,575 1600,583"/>
<polygon points="1784.4,477.9 1794.6,477.9 1799.7,479.1 1817.6,488.1 1812.5,495.8 1799.7,497.7 1793.3,494.5 1792,486.8 1786.9,480.4"/>
<polygon points="1719,607 1733,601.8 1735,614.6 1731.8,615.2"/>
<polygon points="1797,655.5 1820,660.6 1816.2,663.2 1806,662.5"/>
<polygon points="1857,672 1862,673.4 1875,673.4 1876,677.2 1864.8,678.5"/>
<polygon points="1720.3,569.9 1729.3,569.2 1726.7,572.4"/>
<polygon points="1813,740 1820,738 1822,744 1816,745"/>
<polygon points="1864,676 1872,678 1870,682"/>
<ellipse cx="1419" cy="436" rx="2.5" ry="3"/>
<ellipse cx="1760.7" cy="435" rx="5.8" ry="3.8"/>
<ellipse cx="1871.3" cy="472.1" rx="3" ry="2.5"/>
<ellipse cx="1716.5" cy="539.2" rx="2.5" ry="2"/>
<ellipse cx="1717.9" cy="540.5" rx="2" ry="2"/>
<ellipse cx="1328" cy="474" rx="3" ry="2.5"/>
<ellipse cx="1823" cy="707" rx="2.5" ry="2"/>
<ellipse cx="1857" cy="718" rx="2" ry="3"/>
<ellipse cx="1885" cy="729" rx="2.5" ry="2"/>
</g>
<g fill="#4a8a4c" stroke="#fff" stroke-width="0.8">
<circle cx="1182" cy="557" r="4.2"/>
<circle cx="1208" cy="655" r="4.2"/>
<circle cx="1436" cy="724" r="4.2"/>
<circle cx="1444" cy="848" r="4.2"/>
<circle cx="1292" cy="1016" r="4.2"/>
<circle cx="1877" cy="752" r="4.2"/>
</g>
<text class="lbl" x="1309" y="256.7" style="font-size:13px;stroke-width:3.4px" text-anchor="middle">conservation</text>
<text class="lbl2" x="1309" y="256.7" style="font-size:13px" text-anchor="middle">conservation</text>
<text class="lbl" x="1105" y="346.7" style="font-size:13px;stroke-width:3.4px" text-anchor="middle">reservoir</text>
<text class="lbl2" x="1105" y="346.7" style="font-size:13px" text-anchor="middle">reservoir</text>
<text class="lbl" x="1108" y="365.7" style="font-size:13px;stroke-width:3.4px" text-anchor="middle">reservoir</text>
<text class="lbl2" x="1108" y="365.7" style="font-size:13px" text-anchor="middle">reservoir</text>
<text class="lbl" x="1221" y="453.7" style="font-size:13px;stroke-width:3.4px" text-anchor="middle">reservoir</text>
<text class="lbl2" x="1221" y="453.7" style="font-size:13px" text-anchor="middle">reservoir</text>
<text class="lbl" x="1340" y="451.7" style="font-size:13px;stroke-width:3.4px" text-anchor="middle">reservoir</text>
<text class="lbl2" x="1340" y="451.7" style="font-size:13px" text-anchor="middle">reservoir</text>
<text class="lbl" x="1349" y="472.7" style="font-size:13px;stroke-width:3.4px" text-anchor="middle">reservoir</text>
<text class="lbl2" x="1349" y="472.7" style="font-size:13px" text-anchor="middle">reservoir</text>
<text class="lbl" x="1306" y="537.7" style="font-size:13px;stroke-width:3.4px" text-anchor="middle">village_green</text>
<text class="lbl2" x="1306" y="537.7" style="font-size:13px" text-anchor="middle">village_green</text>
<text class="lbl" x="1366" y="552.7" style="font-size:13px;stroke-width:3.4px" text-anchor="middle">cemetery</text>
<text class="lbl2" x="1366" y="552.7" style="font-size:13px" text-anchor="middle">cemetery</text>
<text class="lbl" x="1286" y="586.7" style="font-size:13px;stroke-width:3.4px" text-anchor="middle">cemetery</text>
<text class="lbl2" x="1286" y="586.7" style="font-size:13px" text-anchor="middle">cemetery</text>
<text class="lbl" x="1119" y="582.7" style="font-size:13px;stroke-width:3.4px" text-anchor="middle">residential</text>
<text class="lbl2" x="1119" y="582.7" style="font-size:13px" text-anchor="middle">residential</text>
<text class="lbl" x="1190" y="585.7" style="font-size:13px;stroke-width:3.4px" text-anchor="middle">residential</text>
<text class="lbl2" x="1190" y="585.7" style="font-size:13px" text-anchor="middle">residential</text>
<text class="lbl" x="1156" y="599.7" style="font-size:13px;stroke-width:3.4px" text-anchor="middle">grass</text>
<text class="lbl2" x="1156" y="599.7" style="font-size:13px" text-anchor="middle">grass</text>
<text class="lbl" x="1069" y="627.7" style="font-size:13px;stroke-width:3.4px" text-anchor="middle">reservoir</text>
<text class="lbl2" x="1069" y="627.7" style="font-size:13px" text-anchor="middle">reservoir</text>
<text class="lbl" x="1150" y="681.7" style="font-size:13px;stroke-width:3.4px" text-anchor="middle">grass</text>
<text class="lbl2" x="1150" y="681.7" style="font-size:13px" text-anchor="middle">grass</text>
<text class="lbl" x="1235" y="695.7" style="font-size:13px;stroke-width:3.4px" text-anchor="middle">residential</text>
<text class="lbl2" x="1235" y="695.7" style="font-size:13px" text-anchor="middle">residential</text>
<text class="lbl" x="1158" y="704.7" style="font-size:13px;stroke-width:3.4px" text-anchor="middle">grass</text>
<text class="lbl2" x="1158" y="704.7" style="font-size:13px" text-anchor="middle">grass</text>
<text class="lbl" x="1306" y="706.7" style="font-size:13px;stroke-width:3.4px" text-anchor="middle">cemetery</text>
<text class="lbl2" x="1306" y="706.7" style="font-size:13px" text-anchor="middle">cemetery</text>
<text class="lbl" x="1088" y="781.7" style="font-size:13px;stroke-width:3.4px" text-anchor="middle">industrial</text>
<text class="lbl2" x="1088" y="781.7" style="font-size:13px" text-anchor="middle">industrial</text>
<text class="lbl" x="687" y="943.7" style="font-size:13px;stroke-width:3.4px" text-anchor="middle">farmland</text>
<text class="lbl2" x="687" y="943.7" style="font-size:13px" text-anchor="middle">farmland</text>
<text class="lbl" x="1431" y="929.7" style="font-size:13px;stroke-width:3.4px" text-anchor="middle">conservation</text>
<text class="lbl2" x="1431" y="929.7" style="font-size:13px" text-anchor="middle">conservation</text>
<text class="lbl" x="1729" y="435.7" style="font-size:13px;stroke-width:3.4px" text-anchor="middle">forest</text>
<text class="lbl2" x="1729" y="435.7" style="font-size:13px" text-anchor="middle">forest</text>
<text class="lbl" x="1830" y="439.7" style="font-size:13px;stroke-width:3.4px" text-anchor="middle">forest</text>
<text class="lbl2" x="1830" y="439.7" style="font-size:13px" text-anchor="middle">forest</text>
<text class="lbl" x="1897" y="458.7" style="font-size:13px;stroke-width:3.4px" text-anchor="middle">forest</text>
<text class="lbl2" x="1897" y="458.7" style="font-size:13px" text-anchor="middle">forest</text>
<text class="lbl" x="1948" y="468.7" style="font-size:13px;stroke-width:3.4px" text-anchor="middle">forest</text>
<text class="lbl2" x="1948" y="468.7" style="font-size:13px" text-anchor="middle">forest</text>
<text class="lbl" x="1721" y="475.7" style="font-size:13px;stroke-width:3.4px" text-anchor="middle">forest</text>
<text class="lbl2" x="1721" y="475.7" style="font-size:13px" text-anchor="middle">forest</text>
<text class="lbl" x="1804" y="486.7" style="font-size:13px;stroke-width:3.4px" text-anchor="middle">forest</text>
<text class="lbl2" x="1804" y="486.7" style="font-size:13px" text-anchor="middle">forest</text>
<text class="lbl" x="1764" y="494.7" style="font-size:13px;stroke-width:3.4px" text-anchor="middle">forest</text>
<text class="lbl2" x="1764" y="494.7" style="font-size:13px" text-anchor="middle">forest</text>
<text class="lbl" x="1847" y="504.7" style="font-size:13px;stroke-width:3.4px" text-anchor="middle">forest</text>
<text class="lbl2" x="1847" y="504.7" style="font-size:13px" text-anchor="middle">forest</text>
<text class="lbl" x="1922" y="496.7" style="font-size:13px;stroke-width:3.4px" text-anchor="middle">forest</text>
<text class="lbl2" x="1922" y="496.7" style="font-size:13px" text-anchor="middle">forest</text>
<text class="lbl" x="1949" y="514.7" style="font-size:13px;stroke-width:3.4px" text-anchor="middle">forest</text>
<text class="lbl2" x="1949" y="514.7" style="font-size:13px" text-anchor="middle">forest</text>
<text class="lbl" x="1934" y="528.7" style="font-size:13px;stroke-width:3.4px" text-anchor="middle">forest</text>
<text class="lbl2" x="1934" y="528.7" style="font-size:13px" text-anchor="middle">forest</text>
<text class="lbl" x="1748" y="536.7" style="font-size:13px;stroke-width:3.4px" text-anchor="middle">forest</text>
<text class="lbl2" x="1748" y="536.7" style="font-size:13px" text-anchor="middle">forest</text>
<text class="lbl" x="1824" y="540.7" style="font-size:13px;stroke-width:3.4px" text-anchor="middle">forest</text>
<text class="lbl2" x="1824" y="540.7" style="font-size:13px" text-anchor="middle">forest</text>
<text class="lbl" x="1707" y="549.7" style="font-size:13px;stroke-width:3.4px" text-anchor="middle">forest</text>
<text class="lbl2" x="1707" y="549.7" style="font-size:13px" text-anchor="middle">forest</text>
<text class="lbl" x="1732" y="568.7" style="font-size:13px;stroke-width:3.4px" text-anchor="middle">forest</text>
<text class="lbl2" x="1732" y="568.7" style="font-size:13px" text-anchor="middle">forest</text>
<text class="lbl" x="1774" y="572.7" style="font-size:13px;stroke-width:3.4px" text-anchor="middle">forest</text>
<text class="lbl2" x="1774" y="572.7" style="font-size:13px" text-anchor="middle">forest</text>
<text class="lbl" x="1674" y="574.7" style="font-size:13px;stroke-width:3.4px" text-anchor="middle">forest</text>
<text class="lbl2" x="1674" y="574.7" style="font-size:13px" text-anchor="middle">forest</text>
<text class="lbl" x="1881" y="566.7" style="font-size:13px;stroke-width:3.4px" text-anchor="middle">forest</text>
<text class="lbl2" x="1881" y="566.7" style="font-size:13px" text-anchor="middle">forest</text>
<text class="lbl" x="1858" y="595.7" style="font-size:13px;stroke-width:3.4px" text-anchor="middle">forest</text>
<text class="lbl2" x="1858" y="595.7" style="font-size:13px" text-anchor="middle">forest</text>
<text class="lbl" x="1737" y="602.7" style="font-size:13px;stroke-width:3.4px" text-anchor="middle">forest</text>
<text class="lbl2" x="1737" y="602.7" style="font-size:13px" text-anchor="middle">forest</text>
<text class="lbl" x="1777" y="609.7" style="font-size:13px;stroke-width:3.4px" text-anchor="middle">forest</text>
<text class="lbl2" x="1777" y="609.7" style="font-size:13px" text-anchor="middle">forest</text>
<text class="lbl" x="1765" y="626.7" style="font-size:13px;stroke-width:3.4px" text-anchor="middle">forest</text>
<text class="lbl2" x="1765" y="626.7" style="font-size:13px" text-anchor="middle">forest</text>
<text class="lbl" x="1814" y="638.7" style="font-size:13px;stroke-width:3.4px" text-anchor="middle">forest</text>
<text class="lbl2" x="1814" y="638.7" style="font-size:13px" text-anchor="middle">forest</text>
<text class="lbl" x="1943" y="583.7" style="font-size:13px;stroke-width:3.4px" text-anchor="middle">farmland</text>
<text class="lbl2" x="1943" y="583.7" style="font-size:13px" text-anchor="middle">farmland</text>
<text class="lbl" x="1439" y="719.3" style="font-size:12px;stroke-width:3.4px" text-anchor="start">Bontebok National Park Entrance Gate</text>
<text class="lbl2" x="1439" y="719.3" style="font-size:12px" text-anchor="start">Bontebok National Park Entrance Gate</text>
<text class="lbl" x="1447" y="843.3" style="font-size:12px;stroke-width:3.4px" text-anchor="start">Bontebok National Park Reception &amp; Shop</text>
<text class="lbl2" x="1447" y="843.3" style="font-size:12px" text-anchor="start">Bontebok National Park Reception &amp; Shop</text>
<text class="lbl" x="1287" y="1018.6" style="font-size:10px;stroke-width:2.6px" text-anchor="end">Lang Elsies Kraal Rest Camp</text>
<text class="lbl2" x="1287" y="1018.6" style="font-size:10px" text-anchor="end">Lang Elsies Kraal Rest Camp</text>
<text class="lbl" x="1137" y="551.8" style="font-size:16px;stroke-width:3.4px" text-anchor="middle" font-style="italic">Swellendam</text>
<text class="lbl2" x="1137" y="551.8" style="font-size:16px" text-anchor="middle" font-style="italic">Swellendam</text>
<text class="lbl" x="1184" y="650.0" style="font-size:14px;stroke-width:3.4px" text-anchor="middle">Railton</text>
<text class="lbl2" x="1184" y="650.0" style="font-size:14px" text-anchor="middle">Railton</text>
<text class="lbl" x="1881" y="746.8" style="font-size:16px;stroke-width:3.4px" text-anchor="start" font-style="italic">Buffeljagsrivier</text>
<text class="lbl2" x="1881" y="746.8" style="font-size:16px" text-anchor="start" font-style="italic">Buffeljagsrivier</text>
</svg>
  </div>
  <div class="a" style="left:342px;top:1121px;width:1px;height:21px;background:#9a9a9a"></div>
  <div class="a" style="left:341px;top:94px;width:2px;height:25px;background:linear-gradient(90deg,#a8a8a8,#8a8a8a)"></div>
  <div class="a" style="left:343px;top:119px;width:1px;height:1002px;background:#b8c0c6"></div>
  <div class="a" style="left:1919px;top:94px;width:1px;height:1048px;background:#8a8a8a"></div>
  <div id="status">
    <div class="st" style="left:955px;top:6px;color:#1a1aee;text-decoration:underline">There is a new plugin available</div>
    <div class="a" style="left:1143px;top:6px;width:20px;height:19px;border:1px solid #9a9a9a;background:linear-gradient(#f4f4f4,#dcdcdc)"><svg width="18" height="17" style="position:absolute;left:0;top:0"><circle cx="8" cy="10" r="5" fill="none" stroke="#444" stroke-width="1.6"/><path d="M5,4 Q9,1 12,5" fill="none" stroke="#333" stroke-width="1.5"/><circle cx="8" cy="11" r="1.6" fill="#a33"/><path d="M13,3 L15,2 M14,6 L16,6" stroke="#666" stroke-width="0.8"/></svg></div>
    <div class="st" style="left:1173px;top:6px">Coordinate:</div>
    <div class="a" style="left:1249px;top:6px;width:300px;height:19px;border:1px solid #a6a6a6;background:#fff;font-size:13px;text-align:center;line-height:17px;color:#000">20.3832,-34.0141</div>
    <div class="st" style="left:1558px;top:6px">Scale</div>
    <div class="a" style="left:1604px;top:10px;width:94px;height:15px;border:1px solid #a6a6a6;border-radius:0 4px 4px 0;background:#fff;font-size:13px;line-height:13px;padding-left:3px;color:#000">1:23396<div class="a" style="left:76px;top:0;width:16px;height:13px;border-left:1px solid #c8c8c8;background:linear-gradient(#fafafa,#e4e4e4)"><div class="a" style="left:4px;top:5px;width:0;height:0;border-left:3.5px solid transparent;border-right:3.5px solid transparent;border-top:4px solid #333"></div></div></div>
    <div class="a" style="left:1703px;top:6px;width:21px;height:19px;border:1px solid #9a9a9a;background:linear-gradient(#f4f4f4,#dcdcdc)"><svg width="19" height="17" style="position:absolute;left:0;top:0"><path d="M3,15 Q8,12 15,3" stroke="#555" stroke-width="2.5" fill="none"/><circle cx="7" cy="6" r="3.5" fill="none" stroke="#d22" stroke-width="1.3"/><path d="M4.5,8.5 L9.5,3.5" stroke="#d22" stroke-width="1.3"/></svg></div>
    <div class="a" style="left:1730px;top:8px;width:14px;height:14px;border:1px solid #5a5f66;border-radius:3px;background:linear-gradient(#f6f8fa,#c9d2da)"><div class="a" style="left:4px;top:-3px;width:5px;height:11px;border-right:2.5px solid #1a2430;border-bottom:2.5px solid #1a2430;transform:rotate(40deg)"></div></div>
    <div class="st" style="left:1748px;top:6px">Render</div>
    <div class="st" style="left:1796px;top:6px;color:#3a3a3a">EPSG:4326</div>
    <div class="a" style="left:1874px;top:6px;width:20px;height:19px;border:1px solid #9a9a9a;background:#eee"><svg width="18" height="17" style="position:absolute;left:0;top:0"><circle cx="9" cy="8.5" r="6.5" fill="none" stroke="#777" stroke-width="1.4"/><circle cx="9" cy="8.5" r="3.5" fill="none" stroke="#888" stroke-width="1"/><path d="M2,8.5H16M9,1.5V15.5" stroke="#999" stroke-width="0.8"/></svg></div>
    <svg width="16" height="14" style="position:absolute;left:1904px;top:17px"><path d="M15,2 L3,14 M15,6 L7,14 M15,10 L11,14" stroke="#a0a0a0" stroke-width="1"/></svg>
  </div>
</div>
<svg width="2034" height="1288" style="position:absolute;left:0;top:0;pointer-events:none">
<defs>
<g id="grip"><circle cx="0" cy="0" r="1" /><circle cx="2.5" cy="2.5" r="1"/><circle cx="0" cy="5" r="1"/><circle cx="2.5" cy="7.5" r="1"/><circle cx="0" cy="10" r="1"/><circle cx="2.5" cy="12.5" r="1"/><circle cx="0" cy="15" r="1"/><circle cx="2.5" cy="17.5" r="1"/><circle cx="0" cy="20" r="1"/></g>
<g id="hgrip"><circle cx="0" cy="0" r="1"/><circle cx="2.5" cy="2.5" r="1"/><circle cx="5" cy="0" r="1"/><circle cx="7.5" cy="2.5" r="1"/><circle cx="10" cy="0" r="1"/><circle cx="12.5" cy="2.5" r="1"/><circle cx="15" cy="0" r="1"/><circle cx="17.5" cy="2.5" r="1"/><circle cx="20" cy="0" r="1"/><circle cx="22.5" cy="2.5" r="1"/><circle cx="25" cy="0" r="1"/><circle cx="27.5" cy="2.5" r="1"/><circle cx="30" cy="0" r="1"/></g>
<g id="lens"><circle cx="0" cy="0" r="7.5" fill="#f2f2f2" stroke="#444" stroke-width="1.4"/><line x1="-5.5" y1="5.5" x2="-12" y2="12" stroke="#222" stroke-width="3.2" stroke-linecap="round"/><line x1="-7" y1="7" x2="-11.6" y2="11.6" stroke="#f0c830" stroke-width="2"/></g>
<g id="plus"><rect x="-5" y="-5" width="10" height="10" rx="2" fill="#4f9a53"/><path d="M-3,0H3M0,-3V3" stroke="#fff" stroke-width="2"/></g>
<g id="tag"><path d="M0,5 L4,0 H20 V10 H4 Z" fill="#f6d84a" stroke="#b89a18" stroke-width="1"/></g>
<g id="ddarrow"><path d="M-4,-2.5 H4 L0,3 Z" fill="#505050"/></g>
</defs>
<!-- grips -->
<g fill="#fbfbfb" stroke="#a9a9a9" stroke-width="0.6">
<use href="#grip" x="66" y="64"/><use href="#grip" x="302" y="64"/><use href="#grip" x="730" y="64"/><use href="#grip" x="1243" y="64"/>
<use href="#grip" x="66" y="100"/><use href="#grip" x="454" y="100"/><use href="#grip" x="730" y="100"/><use href="#grip" x="743" y="100"/>
<use href="#hgrip" x="66" y="137"/><use href="#hgrip" x="66" y="563"/>
</g>
<!-- toolbar 1 -->
<!-- pressed zoom-in bg -->
<rect x="382" y="57" width="34" height="35" fill="url(#pressg)"/>
<linearGradient id="pressg" x1="0" y1="0" x2="0" y2="1"><stop offset="0" stop-color="#b4b4b4"/><stop offset="1" stop-color="#d6d6d6"/></linearGradient>
<line x1="382.5" y1="57" x2="382.5" y2="92" stroke="#9a9a9a"/><line x1="415.5" y1="57" x2="415.5" y2="92" stroke="#a8a8a8"/>
<!-- new -->
<path d="M77.5,64.5 H90 L95,69.5 V85.5 H77.5 Z" fill="#fff" stroke="#555" stroke-width="1"/><path d="M90,64.5 V69.5 H95" fill="none" stroke="#555"/>
<!-- open -->
<path d="M113,67 H120 L122,69 H132 V83.5 H113 Z" fill="#f3cc4c" stroke="#b8962a"/><path d="M112,84 L115,73 H135 L132,84 Z" fill="#fcd95a" stroke="#b8962a"/>
<!-- save -->
<rect x="152" y="63" width="20" height="21" rx="2" fill="#6a9bd6" stroke="#3b6aa6"/><rect x="155" y="64" width="14" height="8" fill="#f4f4f4"/><path d="M156.5,66H167.5M156.5,68H167.5M156.5,70H167.5" stroke="#555" stroke-width="0.8"/><rect x="156" y="76" width="12" height="7" fill="#ececec"/><rect x="157.5" y="77.5" width="2.5" height="4" fill="#2a4a7a"/>
<!-- save as -->
<rect x="190" y="63" width="20" height="21" rx="2" fill="#6a9bd6" stroke="#3b6aa6"/><rect x="193" y="64" width="14" height="8" fill="#f4f4f4"/><path d="M194.5,66H205.5M194.5,68H205.5M194.5,70H205.5" stroke="#555" stroke-width="0.8"/><rect x="194" y="76" width="12" height="7" fill="#ececec"/><rect x="195.5" y="77.5" width="2.5" height="4" fill="#2a4a7a"/>
<rect x="202" y="77" width="10" height="10" rx="2" fill="#4f9a53"/><path d="M204,85 L210,79" stroke="#fff" stroke-width="1.8"/>
<!-- new composer -->
<path d="M226.5,64.5 H243 L247.5,69 V80.5 H226.5 Z" fill="#fff" stroke="#666"/><rect x="239" y="77" width="10" height="10" rx="2" fill="#d9aa1c"/><path d="M244,79V85M241,82H247M242,80L246,84M246,80L242,84" stroke="#fff" stroke-width="1"/>
<!-- composer manager -->
<path d="M264.5,64.5 H281 L285.5,69 V80.5 H264.5 Z" fill="#fff" stroke="#666"/><path d="M273,71 L285,84" stroke="#333" stroke-width="3.5" stroke-linecap="round"/><path d="M275,73 L284.5,83.5" stroke="#e8c850" stroke-width="2"/><circle cx="272" cy="70" r="3.5" fill="none" stroke="#333" stroke-width="1.5"/>
<!-- pan hand -->
<path d="M318,86 C314,81 312,76 313,74 C314,72 316,73 318,76 L318,66 C318,64 321,64 321,66 L321,74 L321,63 C321,61 324,61 324,63 L324,74 L324,64 C324,62 327,62 327,64 L327,75 L327,67 C327,65 330,65 330,67 L330,79 C330,83 329,85 328,86 Z" fill="#fff" stroke="#111" stroke-width="1.1"/>
<!-- pan to selection -->
<rect x="349.5" y="63.5" width="16" height="12" fill="#f8e040" stroke="#222" stroke-dasharray="1.5 1"/>
<path d="M361,63 L365,68 H363 V72 H359 V68 H357 Z M361,86 L365,81 H363 V77 H359 V81 H357 Z M350,74.5 L355,70.5 V72.5 H358 V76.5 H355 V78.5 Z M372,74.5 L367,70.5 V72.5 H364 V76.5 H367 V78.5 Z" fill="#5b8fd0" stroke="#3a6aa8" stroke-width="0.6"/>
<!-- zoom in/out etc -->
<use href="#lens" x="401" y="72"/><path d="M396,72H406M401,67V77" stroke="#4a86cf" stroke-width="2.2"/>
<use href="#lens" x="439" y="72"/><path d="M434,72H444" stroke="#4a86cf" stroke-width="2.2"/>
<g opacity="0.45"><use href="#lens" x="477" y="72"/></g><text x="477" y="75.5" font-size="8" font-family="Liberation Sans" font-weight="bold" fill="#999" text-anchor="middle">1:1</text>
<path d="M503,62 H511 L503,70 Z M525,62 H517 L525,70 Z M525,86 H517 L525,78 Z" fill="#4a86cf" stroke="#2f6ab0" stroke-width="0.6"/><rect x="503" y="62" width="3" height="3" fill="#4a86cf"/><use href="#lens" x="514" y="72"/>
<rect x="542" y="63" width="10" height="15" fill="#f8e040" stroke="#222" stroke-dasharray="1.5 1"/><use href="#lens" x="554" y="72"/>
<rect x="582" y="68" width="15" height="13" fill="#d8c8d8" stroke="#a898a8"/><use href="#lens" x="592" y="72"/>
<use href="#lens" x="629" y="72"/><rect x="628" y="76" width="11" height="11" fill="#4f86c8"/><path d="M636,78 L631,81.5 L636,85" stroke="#fff" stroke-width="1.6" fill="none"/>
<g opacity="0.6"><use href="#lens" x="667" y="72"/><rect x="666" y="76" width="11" height="11" fill="#6f9ad0"/><path d="M669,78 L674,81.5 L669,85" stroke="#fff" stroke-width="1.6" fill="none"/></g>
<!-- refresh -->
<path d="M694,76 A9.5,9.5 0 0 1 709,67" fill="none" stroke="#3a7ccc" stroke-width="4"/><path d="M706,62 L715,63 L712,72 Z" fill="#3a7ccc"/><path d="M712,74 A9.5,9.5 0 0 1 697,83" fill="none" stroke="#3a7ccc" stroke-width="4"/><path d="M700,88 L691,87 L694,78 Z" fill="#3a7ccc"/>
<!-- identify -->
<circle cx="746" cy="72" r="8.5" fill="#4a86cf" stroke="#336aaa"/><text x="745.5" y="77" font-size="12" font-family="Liberation Serif" font-style="italic" font-weight="bold" fill="#fff" text-anchor="middle">i</text>
<path d="M750,74 L750,86 L753,83 L756,88 L758,87 L755,82 L759,82 Z" fill="#fff" stroke="#222" stroke-width="0.9"/>
<!-- run action -->
<g opacity="0.7"><circle cx="792" cy="73" r="8" fill="#e6e6e6" stroke="#aaa" stroke-width="2.5" stroke-dasharray="2.5 1.6"/><circle cx="792" cy="73" r="5" fill="#9fbde0"/><path d="M790,70 L795,73 L790,76 Z" fill="#fff"/><path d="M795,76 L795,86 L798,83 L801,87 L802,86 L800,82 L803,82 Z" fill="#fff" stroke="#777" stroke-width="0.8"/></g>
<use href="#ddarrow" x="812" y="80"/>
<!-- select -->
<rect x="832.5" y="63.5" width="13" height="12" fill="#f8e040" stroke="#888"/><rect x="848.5" y="63.5" width="6" height="13" fill="#eee" stroke="#999"/><rect x="832.5" y="79.5" width="13" height="6" fill="#eee" stroke="#999"/>
<path d="M840,70 L840,84 L843,81 L846,87 L848,86 L845,80 L850,80 Z" fill="#fff" stroke="#111" stroke-width="0.9"/>
<use href="#ddarrow" x="862" y="80"/>
<!-- deselect -->
<rect x="879.5" y="66.5" width="14" height="14" fill="#f8e040" stroke="#8a7a20" stroke-dasharray="1.5 1"/><rect x="889" y="76" width="11" height="11" rx="2" fill="#d42a2a"/><circle cx="894.5" cy="81.5" r="3.2" fill="none" stroke="#fff" stroke-width="1.2"/><path d="M892.5,83.5 L896.5,79.5" stroke="#fff" stroke-width="1.2"/>
<!-- expression -->
<text x="914" y="80" font-size="22" font-family="Liberation Serif" fill="#5e2e78">ε</text><rect x="925.5" y="74.5" width="13" height="12" fill="#f8e040" stroke="#8a7a20" stroke-dasharray="1.5 1"/>
<!-- attribute table -->
<rect x="954.5" y="65.5" width="20" height="19" fill="#f4f6f8" stroke="#3a5a7a" stroke-width="1.2"/><rect x="955" y="66" width="19" height="4" fill="#3a5a7a"/><path d="M957,73H960M962,73H972M957,76H960M962,76H972M957,79H960M962,79H972M957,82H960M962,82H972" stroke="#3a5a7a" stroke-width="1"/>
<!-- stats abacus -->
<path d="M991,64 V86 M1011,64 V86 M990,86 H1013 M991,67 H1011 M991,73 H1011 M991,80 H1011" stroke="#888" stroke-width="1" fill="none"/>
<circle cx="1002" cy="67" r="2" fill="none" stroke="#d44"/><circle cx="1007" cy="67" r="2" fill="none" stroke="#d44"/><circle cx="996" cy="73" r="2" fill="none" stroke="#5a5"/><circle cx="1001" cy="73" r="2" fill="none" stroke="#5a5"/><circle cx="996" cy="80" r="2" fill="none" stroke="#69b"/><circle cx="1006" cy="80" r="2" fill="none" stroke="#69b"/>
<!-- measure -->
<path d="M1037,69 H1055 M1037,67 V71 M1055,67 V71" stroke="#2a4a6a" stroke-width="1.5"/><rect x="1035.5" y="74.5" width="21" height="8" fill="#e4e4d8" stroke="#555"/><path d="M1038,75V78M1041,75V77M1044,75V78M1047,75V77M1050,75V78M1053,75V77" stroke="#555" stroke-width="0.8"/>
<use href="#ddarrow" x="1064" y="80"/>
<!-- map tips -->
<path d="M1083,65.5 H1098 Q1101,65.5 1101,69 V76 Q1101,79.5 1098,79.5 H1090 L1085,85 L1086,79.5 H1083 Q1080,79.5 1080,76 V69 Q1080,65.5 1083,65.5 Z" fill="#f6e27c" stroke="#c0a838" stroke-width="1.2"/>
<!-- bookmarks -->
<rect x="1119.5" y="68.5" width="17" height="12" fill="none" stroke="#444" stroke-dasharray="1 1"/><path d="M1128,66 H1133 V70 H1128 Z" fill="#f4c830" stroke="#b89020" stroke-width="0.6"/><rect x="1129" y="76" width="10" height="10" rx="2" fill="#d9aa1c"/><path d="M1134,78V84M1131,81H1137M1132,79L1136,83M1136,79L1132,83" stroke="#fff" stroke-width="0.9"/>
<rect x="1157.5" y="68.5" width="17" height="12" fill="none" stroke="#444" stroke-dasharray="1 1"/><path d="M1166,66 H1171 V70 H1166 Z" fill="#f4c830" stroke="#b89020" stroke-width="0.6"/>
<!-- text annotation -->
<path d="M1203,65.5 H1221.5 V82.5 H1205 L1199,86 L1203,82.5 Z" fill="#dde6ee" stroke="#8a9aaa"/><text x="1212" y="79" font-size="11" font-family="Liberation Serif" font-weight="bold" fill="#333" text-anchor="middle">T</text>
<use href="#ddarrow" x="1228" y="80"/>
<!-- help -->
<rect x="1253" y="64" width="20" height="21" fill="#5a8ac8"/><rect x="1253" y="64" width="5" height="21" fill="#2a3a50"/><text x="1265.5" y="79" font-size="12" font-family="Liberation Sans" fill="#fff" text-anchor="middle">?</text>
<!-- what's this -->
<path d="M1290,64 L1290,80 L1294,76 L1298,83 L1300,82 L1297,75 L1302,75 Z" fill="#fff" stroke="#222" stroke-width="0.9"/><text x="1306" y="85" font-size="19" font-family="Liberation Serif" fill="#111" text-anchor="middle">?</text>

<!-- toolbar 2 -->
<g opacity="0.55">
<path d="M80,122 L77,118 L86,100 L91,102 L82,121 Z" fill="#e8a888" stroke="#c88"/><path d="M84,122 L82,118 L91,100 L96,102 L87,121 Z" fill="#f0a070" stroke="#c87"/>
</g>
<use href="#ddarrow" x="96" y="119"/>
<path d="M117,123 L118,116 L128,99 L132,101 L122,118 Z" fill="#f2d832" stroke="#555" stroke-width="0.8"/><path d="M117,123 L118,116 L122,118 Z" fill="#888"/>
<g opacity="0.55"><rect x="151" y="100" width="20" height="20" rx="2" fill="#6a9bd6" stroke="#3b6aa6"/><rect x="154" y="101" width="14" height="7" fill="#f4f4f4"/><rect x="155" y="112" width="12" height="7" fill="#ececec"/><path d="M164,123 L173,108 L176,110 L167,124 Z" fill="#f09a60"/></g>
<g opacity="0.7"><path d="M190,104 Q195,99 202,102 Q210,100 211,105 Q212,111 205,110 Q198,110 194,112 Q188,112 190,104 Z" fill="#c8e0c8" stroke="#777"/><rect x="201" y="112" width="11" height="11" rx="2" fill="#d9aa1c"/><path d="M206.5,114V121M203,117.5H210M204,115L209,120M209,115L204,120" stroke="#fff" stroke-width="1"/></g>
<g opacity="0.7"><path d="M228,104 Q233,99 240,102 Q248,100 249,105 Q250,111 243,110 Q236,110 232,112 Q226,112 228,104 Z" fill="#c8e0c8" stroke="#777"/><rect x="239" y="112" width="11" height="11" rx="2" fill="#5a8ac8"/><path d="M241,117.5H246M244,114.5L247,117.5L244,120.5" stroke="#fff" stroke-width="1.5" fill="none"/></g>
<g opacity="0.7"><circle cx="274" cy="106" r="2.5" fill="#b8dcb8" stroke="#888"/><path d="M274,106 L267,120 M276,106 H286" stroke="#777"/><path d="M276,121 L285,110 M279,110 L286,121" stroke="#c89040" stroke-width="2"/></g>
<g opacity="0.6"><rect x="305.5" y="102.5" width="14" height="14" fill="#f4ec9a" stroke="#c8b848" stroke-dasharray="1.5 1"/><rect x="316" y="113" width="10" height="10" rx="1" fill="#e86a6a"/><path d="M318.5,115.5L323.5,120.5M323.5,115.5L318.5,120.5" stroke="#fff" stroke-width="1.5"/></g>
<g opacity="0.6"><path d="M341,105 L358,116 M341,115 L358,108" stroke="#777" stroke-width="1"/><circle cx="360" cy="107" r="2.5" fill="none" stroke="#d44" stroke-width="1.3"/><circle cx="360" cy="117" r="2.5" fill="none" stroke="#d44" stroke-width="1.3"/></g>
<g opacity="0.45"><path d="M381.5,104.5H390L392,106.5V119.5H381.5Z" fill="#fff" stroke="#888"/><path d="M386.5,102.5H395L397,104.5V117.5H393" fill="#fff" stroke="#888"/></g>
<g opacity="0.5"><rect x="420.5" y="102.5" width="15" height="19" fill="#fff" stroke="#c8a060"/><rect x="424" y="101" width="8" height="3" fill="#e8d8b8" stroke="#c8a060" stroke-width="0.6"/><path d="M423,109H433M423,112H433M423,115H433" stroke="#aaa"/></g>
<!-- labels -->
<use href="#tag" x="463" y="103"/><text x="474" y="112" font-size="9" font-family="Liberation Sans" font-weight="bold" fill="#222" text-anchor="middle">abc</text>
<rect x="501.5" y="102.5" width="23" height="19" fill="#dde6f0" stroke="#5a92d8"/><use href="#tag" x="503" y="104"/><text x="512" y="112.5" font-size="8.5" font-family="Liberation Sans" font-weight="bold" fill="#222" text-anchor="middle">ab</text><circle cx="519" cy="117.5" r="4" fill="#cc2020"/>
<g opacity="0.55"><use href="#tag" x="540" y="103"/><text x="549" y="112" font-size="8.5" font-family="Liberation Sans" font-weight="bold" fill="#444" text-anchor="middle">ab</text><circle cx="557" cy="117" r="4" fill="#cc3030"/></g>
<g opacity="0.55"><use href="#tag" x="578" y="103"/><text x="589" y="112" font-size="9" font-family="Liberation Sans" font-weight="bold" fill="#444" text-anchor="middle">abc</text><ellipse cx="592" cy="118" rx="7" ry="3.5" fill="#fff" stroke="#5a7aa8"/><circle cx="592" cy="118" r="2" fill="#4a6a98"/></g>
<g opacity="0.55"><use href="#tag" x="616" y="103"/><text x="627" y="112" font-size="9" font-family="Liberation Sans" font-weight="bold" fill="#444" text-anchor="middle">abc</text><rect x="628" y="112" width="11" height="11" fill="#5a8ac8"/><path d="M630,117.5H636M633.5,114.5L636.5,117.5L633.5,120.5" stroke="#fff" stroke-width="1.5" fill="none"/></g>
<g opacity="0.55"><use href="#tag" x="654" y="103"/><text x="665" y="112" font-size="9" font-family="Liberation Sans" font-weight="bold" fill="#444" text-anchor="middle">abc</text><rect x="666" y="112" width="11" height="11" fill="#5a8ac8"/><circle cx="671.5" cy="117.5" r="3" fill="none" stroke="#fff" stroke-width="1.3"/></g>
<g opacity="0.55"><use href="#tag" x="692" y="103"/><text x="703" y="112" font-size="9" font-family="Liberation Sans" font-weight="bold" fill="#444" text-anchor="middle">abc</text><rect x="704" y="112" width="11" height="11" fill="#d9b040"/><path d="M706,121L713,114" stroke="#fff" stroke-width="1.5"/></g>

<!-- left toolbar -->
<g>
<path d="M70.5,148 L77,163 L85,148 H90.5" fill="none" stroke="#2a4a6a" stroke-width="1.5"/><circle cx="70.5" cy="148" r="2.2" fill="#fff" stroke="#2a4a6a" stroke-width="1.2"/><circle cx="77" cy="163" r="2.2" fill="#fff" stroke="#2a4a6a" stroke-width="1.2"/><circle cx="85" cy="148" r="2.2" fill="#fff" stroke="#2a4a6a" stroke-width="1.2"/><circle cx="90.5" cy="148" r="2.2" fill="#fff" stroke="#2a4a6a" stroke-width="1.2"/>
<use href="#plus" x="88" y="165"/>
<rect x="69" y="184" width="20" height="20" fill="#6a9ad0"/><rect x="69" y="184" width="6.7" height="6.7" fill="#1f3a5f"/><rect x="82.3" y="184" width="6.7" height="6.7" fill="#1f3a5f"/><rect x="75.7" y="190.7" width="6.7" height="6.7" fill="#1f3a5f"/><rect x="69" y="197.3" width="6.7" height="6.7" fill="#1f3a5f"/>
<use href="#plus" x="88" y="204"/>
<path d="M70,228 Q70,221 78,221 Q86,221 87,227 Q88,233 84,234 L84,240 L80,240 L80,234 Q76,236 74,232 Q70,232 70,228 Z" fill="#5a8ac0" stroke="#2a4a6a" stroke-width="1"/>
<use href="#plus" x="88" y="242"/>
<path d="M69,285 Q74,268 92,260 Q90,272 78,278 Z" fill="#8ab0dc" stroke="#2a4a6a" stroke-width="1"/><path d="M69,285 L90,262" stroke="#2a4a6a" stroke-width="0.8"/>
<use href="#plus" x="88" y="280"/>
<path d="M69,298 Q85,300 93,313 Q80,314 69,320 Q75,308 69,298 Z" fill="#5a8ac0" stroke="#2a4a6a"/>
<use href="#plus" x="88" y="318"/>
<circle cx="80" cy="345" r="11" fill="#9ab8dc" stroke="#6a90c0"/><path d="M70,341H90M70,349H90M80,334V356" stroke="#e8f0f8" stroke-width="1"/>
<use href="#plus" x="88" y="355"/>
<circle cx="80" cy="384" r="11" fill="#4a78b0" stroke="#1f3050" stroke-width="1.5"/><path d="M70,380H90M70,388H90M80,373V395" stroke="#dde8f4" stroke-width="1.2"/>
<use href="#plus" x="88" y="393"/>
<circle cx="80" cy="422" r="11" fill="#c8dcf0" stroke="#6a90c0"/><path d="M74,416 L79,429 L85,416" fill="none" stroke="#222" stroke-width="1.2"/><circle cx="74" cy="416" r="1.6" fill="#fff" stroke="#222"/><circle cx="85" cy="416" r="1.6" fill="#fff" stroke="#222"/>
<use href="#plus" x="88" y="432"/>
<path d="M78,451 Q86,451 85,459 Q84,466 76,468 Q80,463 78,460 Q73,459 73,455 Q73,451 78,451 Z" fill="#5a8ac0"/>
<use href="#plus" x="88" y="470"/>
<path d="M69,510 Q74,495 92,488 Q90,500 78,505 Z" fill="#8ab0dc" stroke="#2a4a6a" stroke-width="1"/>
<rect x="83" y="502" width="10" height="10" rx="2" fill="#d9aa1c"/><path d="M88,504V510M85,507H91" stroke="#fff" stroke-width="1"/>
<use href="#ddarrow" x="99" y="505"/>
<rect x="70.5" y="528.5" width="19" height="19" fill="#eee" stroke="#777"/><rect x="84" y="540" width="10" height="10" rx="2" fill="#e03a3a"/><path d="M86,545H92" stroke="#fff" stroke-width="2"/>
</g>
</svg>

</body></html>
